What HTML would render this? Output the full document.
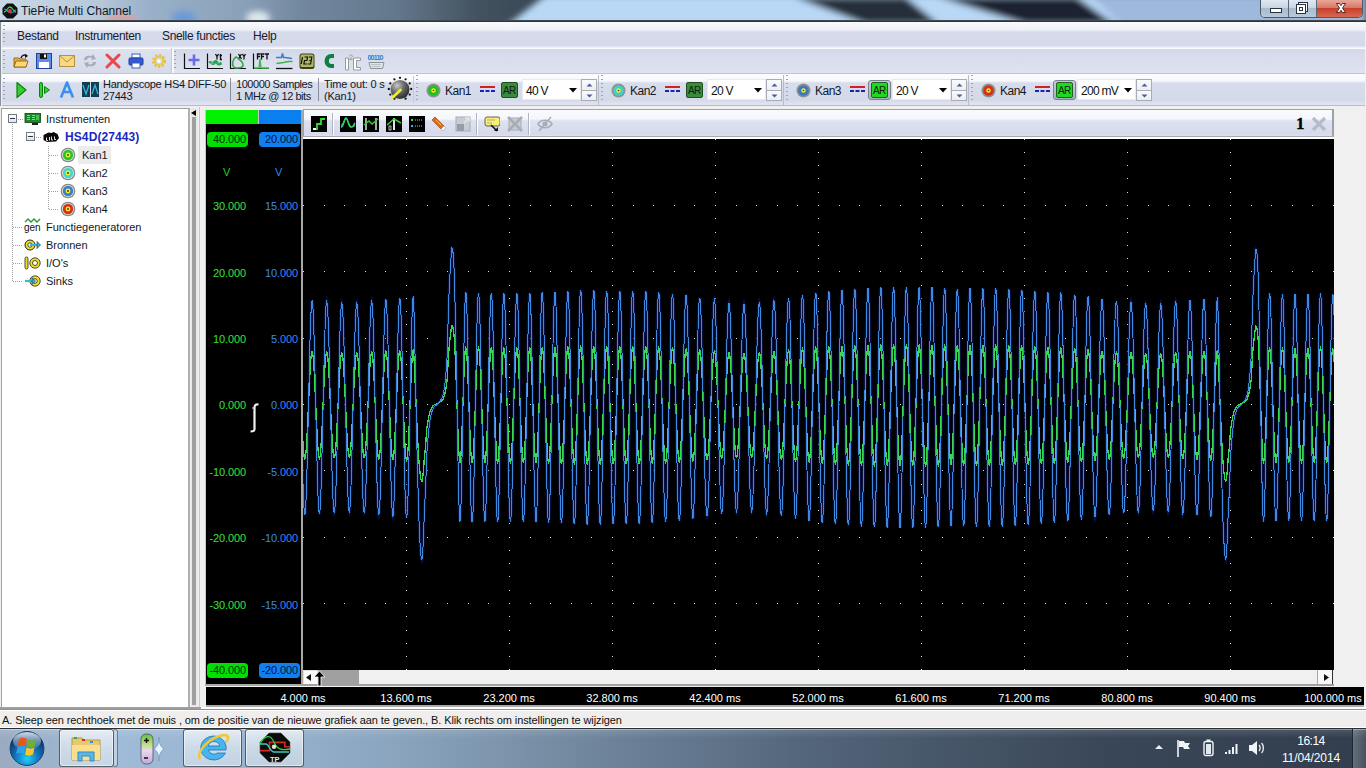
<!DOCTYPE html><html><head><meta charset="utf-8"><style>
*{margin:0;padding:0;box-sizing:border-box}
html,body{width:1366px;height:768px;overflow:hidden;background:#f0f0f0}
body{position:relative;font-family:"Liberation Sans", sans-serif;font-size:11px;color:#000}
.a{position:absolute}
.t{position:absolute;white-space:nowrap;line-height:1}
</style></head><body>

<svg class="a" style="left:0;top:0" width="1366" height="21" viewBox="0 0 1366 21"><defs><linearGradient id="tg" x1="0" x2="1366" gradientUnits="userSpaceOnUse"><stop offset="0" stop-color="#cad8e6"/><stop offset="0.07" stop-color="#b8c9da"/><stop offset="0.11" stop-color="#98b0c9"/><stop offset="0.18" stop-color="#8aa0b8"/><stop offset="0.22" stop-color="#72889e"/><stop offset="0.29" stop-color="#64788c"/><stop offset="0.35" stop-color="#42525f"/><stop offset="0.40" stop-color="#384654"/><stop offset="1" stop-color="#384654"/></linearGradient><filter id="tb" x="-5%" y="-50%" width="110%" height="200%"><feGaussianBlur stdDeviation="3"/></filter></defs>
<rect width="1366" height="21" fill="url(#tg)"/>
<g filter="url(#tb)">
<polygon points="546,-5 1366,-5 1366,26 506,26" fill="#b8d8f6"/>
<polygon points="794,-3 905,-3 939,24 866,24" fill="#272d3a"/>
<polygon points="938,-3 1076,-3 1114,24 1026,24" fill="#1f2433"/>
<polygon points="1090,-5 1366,-5 1366,26 1122,26" fill="#9fb9de"/>
<ellipse cx="122" cy="20" rx="16" ry="6" fill="#d8a0a0"/>
<ellipse cx="184" cy="18" rx="12" ry="7" fill="#6a9ad8"/>
<ellipse cx="258" cy="18" rx="12" ry="7" fill="#dfe8ea"/>
</g></svg>
<svg class="a" style="left:2px;top:3px" width="16" height="16" viewBox="0 0 16 16"><path d="M5 0.5h6l4.5 4.5v6l-4.5 4.5h-6l-4.5-4.5v-6z" fill="#111"/><path d="M2 9c3 0 3-5 6-5s3 5 6 5" stroke="#2fd24a" stroke-width="1.3" fill="none"/><path d="M2 6c3 0 4 4 7 4s3-3 5-3" stroke="#3aa0e8" stroke-width="1.1" fill="none"/><circle cx="8" cy="8" r="2" fill="#e03030"/></svg>
<div class="t" style="left:21px;top:5px;font-size:12px;color:#101828">TiePie Multi Channel</div>
<div class="a" style="left:1260px;top:0;width:103px;height:18px;border:1px solid #4a5868;border-top:none;border-radius:0 0 5px 5px;overflow:hidden;background:#b8c8d8">
<div class="a" style="left:0;top:0;width:27px;height:17px;background:linear-gradient(#dfe8f2,#c8d6e4 45%,#a8bccf 50%,#b8cad9)"></div>
<div class="a" style="left:27px;top:0;width:1px;height:17px;background:#5a6878"></div>
<div class="a" style="left:28px;top:0;width:27px;height:17px;background:linear-gradient(#dfe8f2,#c8d6e4 45%,#a8bccf 50%,#b8cad9)"></div>
<div class="a" style="left:55px;top:0;width:1px;height:17px;background:#5a6878"></div>
<div class="a" style="left:56px;top:0;width:47px;height:17px;background:linear-gradient(#e8a898,#d87868 45%,#c84028 50%,#d86850)"></div>
<svg class="a" style="left:0;top:0" width="103" height="18" viewBox="1260 0 103 18"><rect x="1269.5" y="8.5" width="11" height="4" fill="#fff" stroke="#2a3440"/><rect x="1297.5" y="2.5" width="9" height="9" fill="#fff" stroke="#2a3440"/><rect x="1295.5" y="4.5" width="9" height="9" fill="#fff" stroke="#2a3440"/><rect x="1295.5" y="4.5" width="9" height="9" fill="none" stroke="#2a3440"/><rect x="1298.5" y="7.5" width="3" height="3" fill="none" stroke="#2a3440"/><path d="M1335.5 3.5h3l1.5 2.2 1.5-2.2h3l-3 4.5 3 4.5h-3l-1.5-2.2-1.5 2.2h-3l3-4.5z" fill="#fff" stroke="#3a2018" stroke-width="0.9" stroke-linejoin="round"/></svg>
</div>
<div class="a" style="left:0;top:20px;width:1366px;height:2px;background:linear-gradient(#4a5260,#252a30)"></div>
<div class="a" style="left:0;top:22px;width:1366px;height:746px;background:#f0f0f0"></div>
<div class="a" style="left:0;top:22px;width:1px;height:84px;background:#8a9098"></div>
<div class="a" style="left:2px;top:22px;width:1363px;height:26px;background:linear-gradient(#fafbfd 0,#eef1f8 8px,#d6dbeb 10px,#d5daea 24px,#eef0f8 25px)"></div>
<div class="t" style="left:17px;top:30px;font-size:12px;letter-spacing:-0.35px;color:#1a1a2a">Bestand</div>
<div class="t" style="left:75px;top:30px;font-size:12px;letter-spacing:-0.35px;color:#1a1a2a">Instrumenten</div>
<div class="t" style="left:162px;top:30px;font-size:12px;letter-spacing:-0.35px;color:#1a1a2a">Snelle functies</div>
<div class="t" style="left:253px;top:30px;font-size:12px;letter-spacing:-0.35px;color:#1a1a2a">Help</div>
<div class="a" style="left:3px;top:25px;width:2px;height:20px;background:repeating-linear-gradient(#9aa4b8 0,#9aa4b8 1px,transparent 1px,transparent 4px)"></div>
<div class="a" style="left:2px;top:48px;width:1363px;height:26px;background:linear-gradient(#fafbfe 0,#fafbfe 1px,#d4d9e9 1px,#dfe3f2)"></div>
<div class="a" style="left:2px;top:73px;width:1363px;height:1px;background:#c0c4d0"></div>
<div class="a" style="left:2px;top:48px;width:170px;height:25px;background:linear-gradient(#fff 0,#fff 1px,#dde2f0 1px,#d6dbea);border-right:1px solid #c8ccd8;box-shadow:1px 0 0 #fafbfe,2px 0 0 #fafbfe"></div>
<div class="a" style="left:3px;top:51px;width:2px;height:20px;background:repeating-linear-gradient(#9aa4b8 0,#9aa4b8 1px,transparent 1px,transparent 4px)"></div>
<div class="a" style="left:174px;top:51px;width:2px;height:20px;background:repeating-linear-gradient(#9aa4b8 0,#9aa4b8 1px,transparent 1px,transparent 4px)"></div>
<svg class="a" style="left:13px;top:53px" width="16" height="16" viewBox="0 0 16 16"><path d="M1 5h5l1 1h6v8H1z" fill="#e8b040" stroke="#a06818"/><path d="M1 14l2-6h12l-2 6z" fill="#fcd878" stroke="#a06818"/><path d="M8 5c1-3 4-4 6-2" stroke="#111" stroke-width="1.5" fill="none"/><path d="M12 1l3 2-3 2z" fill="#111"/></svg>
<svg class="a" style="left:36px;top:53px" width="16" height="16" viewBox="0 0 16 16"><rect x="0.5" y="0.5" width="15" height="15" fill="#5a8ee8" stroke="#2040a0"/><rect x="4" y="1" width="7" height="5" fill="#111"/><rect x="8" y="1.5" width="2" height="3" fill="#fff"/><rect x="3" y="9" width="10" height="6" fill="#fff"/></svg>
<svg class="a" style="left:59px;top:53px" width="16" height="16" viewBox="0 0 16 16"><rect x="0.5" y="2.5" width="15" height="11" fill="#f8d880" stroke="#b89040"/><path d="M1 3l7 6 7-6" stroke="#b89040" fill="none"/></svg>
<svg class="a" style="left:82px;top:53px" width="16" height="16" viewBox="0 0 16 16"><path d="M2 7c0-4 4-5 8-4l1-2 3 5-5 1 1-2c-3-1-5 0-5 2z" fill="#a8acb4"/><path d="M14 9c0 4-4 5-8 4l-1 2-3-5 5-1-1 2c3 1 5 0 5-2z" fill="#a8acb4"/></svg>
<svg class="a" style="left:105px;top:53px" width="16" height="16" viewBox="0 0 16 16"><path d="M2 2l12 12M14 2L2 14" stroke="#e84848" stroke-width="3" stroke-linecap="round"/></svg>
<svg class="a" style="left:128px;top:53px" width="16" height="16" viewBox="0 0 16 16"><rect x="4" y="1" width="8" height="4" fill="#fff" stroke="#4058b0"/><rect x="1" y="5" width="14" height="7" rx="1" fill="#3058d8" stroke="#2040a0"/><rect x="4" y="10" width="8" height="5" fill="#fff" stroke="#4058b0"/></svg>
<svg class="a" style="left:151px;top:53px" width="16" height="16" viewBox="0 0 16 16"><circle cx="8" cy="8" r="5.5" fill="none" stroke="#e8c040" stroke-width="3" stroke-dasharray="2.2 1.4"/><circle cx="8" cy="8" r="4" fill="none" stroke="#e8c848" stroke-width="2"/><circle cx="8" cy="8" r="1.6" fill="#fff"/></svg>
<svg class="a" style="left:183px;top:53px" width="18" height="18" viewBox="0 0 18 18"><path d="M1.5 0.5v15H17" stroke="#111" stroke-width="1.2" fill="none"/><path d="M11 1.5v11M5.5 7h11" stroke="#6a6ae8" stroke-width="2.6"/></svg>
<svg class="a" style="left:206px;top:53px" width="18" height="18" viewBox="0 0 18 18"><path d="M1.5 0.5v15H17" stroke="#111" stroke-width="1.2" fill="none"/><path d="M9.5 1l1.5 2.5 1.5-2.5M11 3.5v3M14.5 1v5.5h1.5M13.5 2.5h2.5" stroke="#111" stroke-width="1.3" fill="none"/><path d="M3.5 10c1.5-2 3 2 4.5 0s2-2 3.5 0 2 1 4 0" stroke="#28a048" stroke-width="3" fill="none"/><path d="M4.5 10c1-1 2 1 3 0M11 9.5c1 .5 2 .5 3 0" stroke="#70e0e0" stroke-width="1" fill="none"/></svg>
<svg class="a" style="left:229px;top:53px" width="18" height="18" viewBox="0 0 18 18"><path d="M1.5 0.5v15H17" stroke="#111" stroke-width="1.2" fill="none"/><path d="M9.5 1l3 5M12.5 1l-3 5M13.5 1l1.5 2.5 1.5-2.5M15 3.5v3" stroke="#111" stroke-width="1.3" fill="none"/><path d="M7 4c-3 2-4 6-3 9s7 2 9 1 1-5-2-7-3-3-4-3z" stroke="#38a848" stroke-width="1.6" fill="none"/></svg>
<svg class="a" style="left:252px;top:53px" width="18" height="18" viewBox="0 0 18 18"><path d="M1.5 0.5v15H17" stroke="#111" stroke-width="1.2" fill="none"/><path d="M5.5 6.5v-5.5h3M5.5 3.5h2.5M9.5 6.5v-5.5h3M9.5 3.5h2.5M13 1h4M15 1v5.5" stroke="#111" stroke-width="1.3" fill="none"/><path d="M2 15h5l1-9 1 9h8" stroke="#40b848" stroke-width="1.4" fill="none"/></svg>
<svg class="a" style="left:276px;top:53px" width="18" height="18" viewBox="0 0 18 18"><path d="M0 4.5h5.5l1-4 1 4h1.5l7 1" stroke="#3a80c0" stroke-width="1.5" fill="none"/><path d="M0.5 10.5l7-1 5-1h4" stroke="#40b048" stroke-width="1.6" fill="none"/><path d="M0 15.5h16.5" stroke="#111" stroke-width="1.3"/></svg>
<svg class="a" style="left:299px;top:53px" width="18" height="18" viewBox="0 0 18 18"><rect x="0.5" y="0.5" width="15" height="15.5" rx="2.5" fill="#404018"/><rect x="1.5" y="1.5" width="13" height="12.5" rx="1.5" fill="#b0b868"/><path d="M3.5 4l-1.2 7M5.5 4h3l-.6 3.5h-2.4l-.6 3.5h3M9.8 4h3l-1.2 7h-3M10.4 7.5h2" stroke="#111" stroke-width="1.2" fill="none"/></svg>
<svg class="a" style="left:322px;top:53px" width="18" height="18" viewBox="0 0 18 18"><path d="M12 1H9A6.5 7 0 0 0 9 15H12V11H9.5A2.6 3 0 0 1 9.5 5H12z" fill="#108040"/></svg>
<svg class="a" style="left:344px;top:53px" width="18" height="18" viewBox="0 0 18 18"><path d="M1.5 5h3v12h-3z" stroke="#999" stroke-width="1" fill="#fff"/><path d="M5.5 3.5c0-2 3-2 3 0 0 1-3 2-3 3h3" stroke="#999" stroke-width="0.9" fill="none"/><path d="M16.5 7.5v-2.5h-7v12h7v-2.5h-4v-7z" stroke="#999" stroke-width="1" fill="#fff"/></svg>
<svg class="a" style="left:368px;top:53px" width="18" height="18" viewBox="0 0 18 18"><text x="-0.5" y="6.5" font-size="7" font-weight="bold" fill="#2a80c8" font-family="Liberation Sans" letter-spacing="-0.8">00110</text><path d="M1 9.5h15l-1.5 6h-12z" fill="#e0e4e8" stroke="#909498"/><path d="M3.5 11.5h10M4.5 13.5h8" stroke="#888" stroke-width="0.8" stroke-dasharray="1 1"/></svg>
<div class="a" style="left:2px;top:74px;width:1363px;height:32px;background:linear-gradient(#fdfdfe 0,#f6f8fc 7px,#d8ddec 9px,#d4d9e9 26px,#e2e5f2 31px)"></div>
<div class="a" style="left:2px;top:105px;width:1363px;height:1px;background:#b8bcc8"></div>
<div class="a" style="left:3px;top:78px;width:2px;height:24px;background:repeating-linear-gradient(#9aa4b8 0,#9aa4b8 1px,transparent 1px,transparent 4px)"></div>
<svg class="a" style="left:15px;top:81px" width="14" height="18" viewBox="0 0 14 18"><path d="M2 1.5l9 7.5-9 7.5z" fill="#30d030" stroke="#108010" stroke-width="1.2" stroke-linejoin="round"/></svg>
<svg class="a" style="left:38px;top:81px" width="14" height="18" viewBox="0 0 14 18"><rect x="1.5" y="1.5" width="3" height="15" rx="1.5" fill="#30d030" stroke="#108010"/><path d="M6.5 5.5l5 3.5-5 3.5z" fill="#30d030" stroke="#108010" stroke-linejoin="round"/></svg>
<svg class="a" style="left:59px;top:81px" width="16" height="18" viewBox="0 0 16 18"><path d="M2 16.5L8 1.5l6 15M4.5 11h7" stroke="#3a90f0" stroke-width="2.6" fill="none" stroke-linejoin="round"/></svg>
<svg class="a" style="left:82px;top:82px" width="17" height="15" viewBox="0 0 17 15"><rect x="0" y="0" width="8" height="15" fill="#104050"/><rect x="9" y="0" width="8" height="15" fill="#104050"/><path d="M1 3l3 9 3-9M10 12l3-9 3 9" stroke="#3ab0e8" stroke-width="1.3" fill="none"/></svg>
<div class="t" style="left:103px;top:79px;letter-spacing:-0.27px;color:#101828">Handyscope HS4 DIFF-50</div>
<div class="t" style="left:103px;top:91px;letter-spacing:-0.27px;color:#101828">27443</div>
<div class="a" style="left:230px;top:78px;width:1px;height:23px;background:#8890a0"></div>
<div class="t" style="left:236px;top:79px;letter-spacing:-0.45px;color:#101828">100000 Samples</div>
<div class="t" style="left:236px;top:91px;letter-spacing:-0.45px;color:#101828">1 MHz @ 12 bits</div>
<div class="a" style="left:318px;top:78px;width:1px;height:23px;background:#8890a0"></div>
<div class="t" style="left:324px;top:79px;letter-spacing:-0.2px;color:#101828">Time out: 0 s</div>
<div class="t" style="left:324px;top:91px;letter-spacing:-0.2px;color:#101828">(Kan1)</div>
<svg class="a" style="left:385px;top:75px" width="30" height="28" viewBox="385 75 30 28"><defs><radialGradient id="kg" cx="35%" cy="30%" r="75%"><stop offset="0" stop-color="#c8c8c8"/><stop offset="0.45" stop-color="#707070"/><stop offset="1" stop-color="#282828"/></radialGradient></defs><circle cx="394.4" cy="98.7" r="1.15" fill="#111"/><circle cx="390.3" cy="94.6" r="1.15" fill="#111"/><circle cx="388.8" cy="89.0" r="1.15" fill="#111"/><circle cx="390.3" cy="83.4" r="1.15" fill="#111"/><circle cx="394.4" cy="79.3" r="1.15" fill="#111"/><circle cx="400.0" cy="77.8" r="1.15" fill="#111"/><circle cx="405.6" cy="79.3" r="1.15" fill="#111"/><circle cx="409.7" cy="83.4" r="1.15" fill="#111"/><circle cx="411.2" cy="89.0" r="1.15" fill="#111"/><circle cx="409.7" cy="94.6" r="1.15" fill="#111"/><circle cx="405.6" cy="98.7" r="1.15" fill="#111"/><circle cx="400" cy="89.5" r="9.5" fill="url(#kg)"/><path d="M392.5 97.5L400.5 90" stroke="#f0f030" stroke-width="2.6" stroke-linecap="round"/></svg>
<div class="a" style="left:413px;top:76px;width:1px;height:27px;background:#c8ccd8"></div>
<div class="a" style="left:416px;top:75px;width:2px;height:28px;background:repeating-linear-gradient(#9aa4b8 0,#9aa4b8 1px,transparent 1px,transparent 4px)"></div><svg class="a" style="left:426px;top:83px" width="15" height="15" viewBox="0 0 15 15"><circle cx="7.5" cy="7.5" r="7" fill="#909090"/><circle cx="7.5" cy="7.5" r="5.3" fill="#20c020"/><circle cx="7.5" cy="7.5" r="2.2" fill="#f0f020"/><circle cx="7.5" cy="7.5" r="0.8" fill="#603020"/></svg><div class="t" style="left:445px;top:85px;font-size:12px;letter-spacing:-0.5px;color:#101828">Kan1</div><svg class="a" style="left:480px;top:86px" width="15" height="8" viewBox="0 0 15 8"><rect x="0" y="0" width="15" height="2" fill="#d02020"/><path d="M0 5h4M5.5 5h4M11 5h4" stroke="#2020b0" stroke-width="2"/></svg><div class="a" style="left:501px;top:82px;width:17px;height:16px;border:1px solid #205020;border-radius:2px;background:#3a8a3e"></div><div class="t" style="left:503px;top:86px;font-size:10px;letter-spacing:-0.6px;color:#102010">AR</div><div class="a" style="left:522px;top:79px;width:59px;height:21px;background:#fff;border:1px solid #e8eaf0"></div><div class="t" style="left:526px;top:85px;font-size:12px;letter-spacing:-0.7px;color:#101010">40 V</div><svg class="a" style="left:569px;top:88px" width="8" height="5" viewBox="0 0 8 5"><path d="M0 0h8L4 4.5z" fill="#000"/></svg><div class="a" style="left:581px;top:79px;width:16px;height:11px;border:1px solid #a8acb4;border-bottom:none;background:linear-gradient(#fafafa,#eceef2)"></div><div class="a" style="left:581px;top:90px;width:16px;height:11px;border:1px solid #a8acb4;background:linear-gradient(#fafafa,#eceef2)"></div><svg class="a" style="left:586px;top:83px" width="7" height="4" viewBox="0 0 7 4"><path d="M0.5 3.5L3.5 0.5 6.5 3.5z" fill="#4a5aa0"/></svg><svg class="a" style="left:586px;top:94px" width="7" height="4" viewBox="0 0 7 4"><path d="M0.5 0.5L3.5 3.5 6.5 0.5z" fill="#4a5aa0"/></svg><div class="a" style="left:598px;top:75px;width:1px;height:30px;background:#b8bcc8"></div>
<div class="a" style="left:601px;top:75px;width:2px;height:28px;background:repeating-linear-gradient(#9aa4b8 0,#9aa4b8 1px,transparent 1px,transparent 4px)"></div><svg class="a" style="left:611px;top:83px" width="15" height="15" viewBox="0 0 15 15"><circle cx="7.5" cy="7.5" r="7" fill="#909090"/><circle cx="7.5" cy="7.5" r="5.3" fill="#40d0c8"/><circle cx="7.5" cy="7.5" r="2.2" fill="#f0f020"/><circle cx="7.5" cy="7.5" r="0.8" fill="#603020"/></svg><div class="t" style="left:630px;top:85px;font-size:12px;letter-spacing:-0.5px;color:#101828">Kan2</div><svg class="a" style="left:665px;top:86px" width="15" height="8" viewBox="0 0 15 8"><rect x="0" y="0" width="15" height="2" fill="#d02020"/><path d="M0 5h4M5.5 5h4M11 5h4" stroke="#2020b0" stroke-width="2"/></svg><div class="a" style="left:686px;top:82px;width:17px;height:16px;border:1px solid #205020;border-radius:2px;background:#3a8a3e"></div><div class="t" style="left:688px;top:86px;font-size:10px;letter-spacing:-0.6px;color:#102010">AR</div><div class="a" style="left:707px;top:79px;width:59px;height:21px;background:#fff;border:1px solid #e8eaf0"></div><div class="t" style="left:711px;top:85px;font-size:12px;letter-spacing:-0.7px;color:#101010">20 V</div><svg class="a" style="left:754px;top:88px" width="8" height="5" viewBox="0 0 8 5"><path d="M0 0h8L4 4.5z" fill="#000"/></svg><div class="a" style="left:766px;top:79px;width:16px;height:11px;border:1px solid #a8acb4;border-bottom:none;background:linear-gradient(#fafafa,#eceef2)"></div><div class="a" style="left:766px;top:90px;width:16px;height:11px;border:1px solid #a8acb4;background:linear-gradient(#fafafa,#eceef2)"></div><svg class="a" style="left:771px;top:83px" width="7" height="4" viewBox="0 0 7 4"><path d="M0.5 3.5L3.5 0.5 6.5 3.5z" fill="#4a5aa0"/></svg><svg class="a" style="left:771px;top:94px" width="7" height="4" viewBox="0 0 7 4"><path d="M0.5 0.5L3.5 3.5 6.5 0.5z" fill="#4a5aa0"/></svg><div class="a" style="left:783px;top:75px;width:1px;height:30px;background:#b8bcc8"></div>
<div class="a" style="left:786px;top:75px;width:2px;height:28px;background:repeating-linear-gradient(#9aa4b8 0,#9aa4b8 1px,transparent 1px,transparent 4px)"></div><svg class="a" style="left:796px;top:83px" width="15" height="15" viewBox="0 0 15 15"><circle cx="7.5" cy="7.5" r="7" fill="#909090"/><circle cx="7.5" cy="7.5" r="5.3" fill="#3a78c0"/><circle cx="7.5" cy="7.5" r="2.2" fill="#f0f020"/><circle cx="7.5" cy="7.5" r="0.8" fill="#603020"/></svg><div class="t" style="left:815px;top:85px;font-size:12px;letter-spacing:-0.5px;color:#101828">Kan3</div><svg class="a" style="left:850px;top:86px" width="15" height="8" viewBox="0 0 15 8"><rect x="0" y="0" width="15" height="2" fill="#d02020"/><path d="M0 5h4M5.5 5h4M11 5h4" stroke="#2020b0" stroke-width="2"/></svg><div class="a" style="left:868px;top:80px;width:23px;height:20px;border:1px solid #7a8090;border-radius:3px;background:linear-gradient(#c8ccd8,#a8b0c0)"></div><div class="a" style="left:871px;top:82px;width:17px;height:16px;border:1px solid #206020;border-radius:2px;background:#20d820"></div><div class="t" style="left:873px;top:86px;font-size:10px;letter-spacing:-0.6px;color:#102010">AR</div><div class="a" style="left:892px;top:79px;width:59px;height:21px;background:#fff;border:1px solid #e8eaf0"></div><div class="t" style="left:896px;top:85px;font-size:12px;letter-spacing:-0.7px;color:#101010">20 V</div><svg class="a" style="left:939px;top:88px" width="8" height="5" viewBox="0 0 8 5"><path d="M0 0h8L4 4.5z" fill="#000"/></svg><div class="a" style="left:951px;top:79px;width:16px;height:11px;border:1px solid #a8acb4;border-bottom:none;background:linear-gradient(#fafafa,#eceef2)"></div><div class="a" style="left:951px;top:90px;width:16px;height:11px;border:1px solid #a8acb4;background:linear-gradient(#fafafa,#eceef2)"></div><svg class="a" style="left:956px;top:83px" width="7" height="4" viewBox="0 0 7 4"><path d="M0.5 3.5L3.5 0.5 6.5 3.5z" fill="#4a5aa0"/></svg><svg class="a" style="left:956px;top:94px" width="7" height="4" viewBox="0 0 7 4"><path d="M0.5 0.5L3.5 3.5 6.5 0.5z" fill="#4a5aa0"/></svg><div class="a" style="left:968px;top:75px;width:1px;height:30px;background:#b8bcc8"></div>
<div class="a" style="left:971px;top:75px;width:2px;height:28px;background:repeating-linear-gradient(#9aa4b8 0,#9aa4b8 1px,transparent 1px,transparent 4px)"></div><svg class="a" style="left:981px;top:83px" width="15" height="15" viewBox="0 0 15 15"><circle cx="7.5" cy="7.5" r="7" fill="#909090"/><circle cx="7.5" cy="7.5" r="5.3" fill="#d83018"/><circle cx="7.5" cy="7.5" r="2.2" fill="#f0f020"/><circle cx="7.5" cy="7.5" r="0.8" fill="#603020"/></svg><div class="t" style="left:1000px;top:85px;font-size:12px;letter-spacing:-0.5px;color:#101828">Kan4</div><svg class="a" style="left:1035px;top:86px" width="15" height="8" viewBox="0 0 15 8"><rect x="0" y="0" width="15" height="2" fill="#d02020"/><path d="M0 5h4M5.5 5h4M11 5h4" stroke="#2020b0" stroke-width="2"/></svg><div class="a" style="left:1053px;top:80px;width:23px;height:20px;border:1px solid #7a8090;border-radius:3px;background:linear-gradient(#c8ccd8,#a8b0c0)"></div><div class="a" style="left:1056px;top:82px;width:17px;height:16px;border:1px solid #206020;border-radius:2px;background:#20d820"></div><div class="t" style="left:1058px;top:86px;font-size:10px;letter-spacing:-0.6px;color:#102010">AR</div><div class="a" style="left:1077px;top:79px;width:59px;height:21px;background:#fff;border:1px solid #e8eaf0"></div><div class="t" style="left:1081px;top:85px;font-size:12px;letter-spacing:-0.7px;color:#101010">200 mV</div><svg class="a" style="left:1124px;top:88px" width="8" height="5" viewBox="0 0 8 5"><path d="M0 0h8L4 4.5z" fill="#000"/></svg><div class="a" style="left:1136px;top:79px;width:16px;height:11px;border:1px solid #a8acb4;border-bottom:none;background:linear-gradient(#fafafa,#eceef2)"></div><div class="a" style="left:1136px;top:90px;width:16px;height:11px;border:1px solid #a8acb4;background:linear-gradient(#fafafa,#eceef2)"></div><svg class="a" style="left:1141px;top:83px" width="7" height="4" viewBox="0 0 7 4"><path d="M0.5 3.5L3.5 0.5 6.5 3.5z" fill="#4a5aa0"/></svg><svg class="a" style="left:1141px;top:94px" width="7" height="4" viewBox="0 0 7 4"><path d="M0.5 0.5L3.5 3.5 6.5 0.5z" fill="#4a5aa0"/></svg>
<div class="a" style="left:1px;top:108px;width:189px;height:601px;background:#fff;border:1px solid #a0a0a0;border-right:2px solid #b0b0b0;border-bottom:2px solid #a8a8a8"></div>
<div class="a" style="left:191px;top:108px;width:7px;height:600px;background:#e8e8e8"></div>
<svg class="a" style="left:191px;top:110px" width="6" height="6" viewBox="0 0 6 6"><path d="M0 3l5-3v6z" fill="#000"/></svg>
<div class="a" style="left:192px;top:117px;width:4px;height:588px;background:#a0a0a0"></div>
<div class="a" style="left:199px;top:107px;width:1px;height:602px;background:#c8c8c8"></div>
<div class="a" style="left:12px;top:124px;width:1px;height:158px;background:repeating-linear-gradient(#a0a0a0 0,#a0a0a0 1px,transparent 1px,transparent 2px)"></div>
<div class="a" style="left:48px;top:146px;width:1px;height:63px;background:repeating-linear-gradient(#a0a0a0 0,#a0a0a0 1px,transparent 1px,transparent 2px)"></div>
<div class="a" style="left:49px;top:155px;width:10px;height:1px;background:repeating-linear-gradient(90deg,#a0a0a0 0,#a0a0a0 1px,transparent 1px,transparent 2px)"></div>
<div class="a" style="left:49px;top:173px;width:10px;height:1px;background:repeating-linear-gradient(90deg,#a0a0a0 0,#a0a0a0 1px,transparent 1px,transparent 2px)"></div>
<div class="a" style="left:49px;top:191px;width:10px;height:1px;background:repeating-linear-gradient(90deg,#a0a0a0 0,#a0a0a0 1px,transparent 1px,transparent 2px)"></div>
<div class="a" style="left:49px;top:209px;width:10px;height:1px;background:repeating-linear-gradient(90deg,#a0a0a0 0,#a0a0a0 1px,transparent 1px,transparent 2px)"></div>
<div class="a" style="left:13px;top:227px;width:10px;height:1px;background:repeating-linear-gradient(90deg,#a0a0a0 0,#a0a0a0 1px,transparent 1px,transparent 2px)"></div>
<div class="a" style="left:13px;top:245px;width:10px;height:1px;background:repeating-linear-gradient(90deg,#a0a0a0 0,#a0a0a0 1px,transparent 1px,transparent 2px)"></div>
<div class="a" style="left:13px;top:263px;width:10px;height:1px;background:repeating-linear-gradient(90deg,#a0a0a0 0,#a0a0a0 1px,transparent 1px,transparent 2px)"></div>
<div class="a" style="left:13px;top:281px;width:10px;height:1px;background:repeating-linear-gradient(90deg,#a0a0a0 0,#a0a0a0 1px,transparent 1px,transparent 2px)"></div>
<div class="a" style="left:18px;top:119px;width:5px;height:1px;background:repeating-linear-gradient(90deg,#a0a0a0 0,#a0a0a0 1px,transparent 1px,transparent 2px)"></div>
<div class="a" style="left:36px;top:137px;width:5px;height:1px;background:repeating-linear-gradient(90deg,#a0a0a0 0,#a0a0a0 1px,transparent 1px,transparent 2px)"></div>
<div class="a" style="left:8px;top:114px;width:9px;height:9px;border:1px solid #707880;background:linear-gradient(#fff,#e0e4ea)"></div>
<div class="a" style="left:10px;top:118px;width:5px;height:1px;background:#303848"></div>
<div class="a" style="left:26px;top:132px;width:9px;height:9px;border:1px solid #707880;background:linear-gradient(#fff,#e0e4ea)"></div>
<div class="a" style="left:28px;top:136px;width:5px;height:1px;background:#303848"></div>
<svg class="a" style="left:24px;top:113px" width="18" height="13" viewBox="0 0 18 13"><rect x="1" y="0.5" width="15.5" height="9" fill="#1a8a2a" stroke="#0a4010" stroke-width="0.8"/><path d="M3 2.5h3M3 4.5h3M3 6.5h3M8 2.5h3M8 4.5h3M8 6.5h3" stroke="#70e080" stroke-width="1"/><rect x="12" y="2" width="3" height="5" fill="#40c050"/><rect x="8" y="10" width="6" height="2" fill="#222"/></svg>
<div class="t" style="left:46px;top:114px;color:#101828">Instrumenten</div>
<svg class="a" style="left:42px;top:131px" width="18" height="12" viewBox="0 0 18 12"><path d="M1.5 4l5-2.5 3 .5 2-1 4 2 1.5 4-3 3.5-9 .5-3.5-2z" fill="#0a0a0a"/><path d="M4.5 6.5v3h1.5M7.5 6v3.5M9.5 5.5v3.5h1.5M12.5 5.5v3h1.5" stroke="#f0d8d8" stroke-width="1" fill="none"/></svg>
<div class="t" style="left:65px;top:131px;font-weight:bold;font-size:12px;color:#1828c0;letter-spacing:0.1px">HS4D(27443)</div>
<div class="a" style="left:78px;top:146px;width:33px;height:18px;background:#ececec"></div>
<svg class="a" style="left:60px;top:147px" width="16" height="16" viewBox="0 0 16 16"><circle cx="8" cy="8" r="7.3" fill="#888"/><circle cx="8" cy="8" r="6" fill="#e8e8e8"/><circle cx="8" cy="8" r="5.2" fill="#28c828"/><circle cx="8" cy="8" r="2.4" fill="#f8f020"/><circle cx="8" cy="8" r="0.9" fill="#402010"/></svg>
<div class="t" style="left:82px;top:150px;color:#101828">Kan1</div>
<svg class="a" style="left:60px;top:165px" width="16" height="16" viewBox="0 0 16 16"><circle cx="8" cy="8" r="7.3" fill="#888"/><circle cx="8" cy="8" r="6" fill="#e8e8e8"/><circle cx="8" cy="8" r="5.2" fill="#40d8d0"/><circle cx="8" cy="8" r="2.4" fill="#f8f020"/><circle cx="8" cy="8" r="0.9" fill="#402010"/></svg>
<div class="t" style="left:82px;top:168px;color:#101828">Kan2</div>
<svg class="a" style="left:60px;top:183px" width="16" height="16" viewBox="0 0 16 16"><circle cx="8" cy="8" r="7.3" fill="#888"/><circle cx="8" cy="8" r="6" fill="#e8e8e8"/><circle cx="8" cy="8" r="5.2" fill="#3a80c8"/><circle cx="8" cy="8" r="2.4" fill="#f8f020"/><circle cx="8" cy="8" r="0.9" fill="#402010"/></svg>
<div class="t" style="left:82px;top:186px;color:#101828">Kan3</div>
<svg class="a" style="left:60px;top:201px" width="16" height="16" viewBox="0 0 16 16"><circle cx="8" cy="8" r="7.3" fill="#888"/><circle cx="8" cy="8" r="6" fill="#e8e8e8"/><circle cx="8" cy="8" r="5.2" fill="#d83018"/><circle cx="8" cy="8" r="2.4" fill="#f8f020"/><circle cx="8" cy="8" r="0.9" fill="#402010"/></svg>
<div class="t" style="left:82px;top:204px;color:#101828">Kan4</div>
<svg class="a" style="left:24px;top:218px" width="18" height="17" viewBox="0 0 18 17"><path d="M1 4l3-3 3 3 3-3 3 3 3-3" stroke="#20a030" stroke-width="1.4" fill="none"/><text x="0" y="13" font-size="10" font-family="Liberation Sans" fill="#111">gen</text></svg>
<div class="t" style="left:46px;top:222px;color:#101828">Functiegeneratoren</div>
<svg class="a" style="left:24px;top:238px" width="17" height="14" viewBox="0 0 17 14"><circle cx="6" cy="7" r="5" fill="#f0e020" stroke="#222" stroke-width="1"/><circle cx="6" cy="7" r="2.2" fill="#fff" stroke="#222" stroke-width="0.8"/><path d="M6 7h8" stroke="#30b8e0" stroke-width="2"/><path d="M13 3.5l3.5 3.5-3.5 3.5z" fill="#30b8e0" stroke="#222" stroke-width="0.6"/></svg>
<div class="t" style="left:46px;top:240px;color:#101828">Bronnen</div>
<svg class="a" style="left:24px;top:256px" width="17" height="14" viewBox="0 0 17 14"><rect x="1" y="1" width="3" height="12" rx="1.5" fill="#f0e020" stroke="#222" stroke-width="0.8"/><circle cx="11" cy="7" r="5.2" fill="#f0e020" stroke="#222" stroke-width="0.8"/><circle cx="11" cy="7" r="2.5" fill="#fff" stroke="#222" stroke-width="0.8"/></svg>
<div class="t" style="left:46px;top:258px;color:#101828">I/O's</div>
<svg class="a" style="left:24px;top:274px" width="17" height="14" viewBox="0 0 17 14"><circle cx="11" cy="7" r="5.2" fill="#f0e020" stroke="#222" stroke-width="0.8"/><circle cx="11" cy="7" r="2.3" fill="#fff" stroke="#222" stroke-width="0.8"/><path d="M1 7h8" stroke="#30b8e0" stroke-width="2.2"/><path d="M8 3.5l3.5 3.5-3.5 3.5z" fill="#30b8e0" stroke="#222" stroke-width="0.6"/></svg>
<div class="t" style="left:46px;top:276px;color:#101828">Sinks</div>
<div class="a" style="left:205px;top:108px;width:98px;height:578px;background:#000;border-left:1px solid #c8c8c8"></div>
<div class="a" style="left:206px;top:110px;width:52px;height:14px;background:#00f000"></div>
<div class="a" style="left:259px;top:110px;width:42px;height:14px;background:#0a80f0"></div>
<div class="a" style="left:258px;top:108px;width:1px;height:16px;background:#c8c8c8"></div>
<div class="a" style="left:205px;top:108px;width:98px;height:2px;background:#f0f0f0"></div>
<div class="a" style="left:301px;top:110px;width:2px;height:576px;background:#a8a8a8"></div>
<div class="a" style="left:205px;top:684px;width:98px;height:2px;background:#a8a8a8"></div>
<div class="a" style="left:207px;top:132px;width:41px;height:15px;border-radius:4px;background:#00e000"></div><div class="t" style="left:207px;top:134px;width:39px;text-align:right;color:#053005;letter-spacing:-0.1px">40.000</div>
<div class="a" style="left:259px;top:132px;width:41px;height:15px;border-radius:4px;background:#1080f0"></div><div class="t" style="left:259px;top:134px;width:39px;text-align:right;color:#051040;letter-spacing:-0.1px">20.000</div>
<div class="a" style="left:207px;top:663px;width:41px;height:15px;border-radius:4px;background:#00e000"></div><div class="t" style="left:207px;top:665px;width:39px;text-align:right;color:#053005;letter-spacing:-0.1px">-40.000</div>
<div class="a" style="left:259px;top:663px;width:41px;height:15px;border-radius:4px;background:#1080f0"></div><div class="t" style="left:259px;top:665px;width:39px;text-align:right;color:#051040;letter-spacing:-0.1px">-20.000</div>
<div class="t" style="left:223px;top:167px;color:#20d020">V</div>
<div class="t" style="left:275px;top:167px;color:#3088f0">V</div>
<div class="t" style="left:200px;top:201px;width:46px;text-align:right;color:#38e038;letter-spacing:-0.1px">30.000</div>
<div class="t" style="left:250px;top:201px;width:48px;text-align:right;color:#3a8af0;letter-spacing:-0.1px">15.000</div>
<div class="t" style="left:200px;top:268px;width:46px;text-align:right;color:#38e038;letter-spacing:-0.1px">20.000</div>
<div class="t" style="left:250px;top:268px;width:48px;text-align:right;color:#3a8af0;letter-spacing:-0.1px">10.000</div>
<div class="t" style="left:200px;top:334px;width:46px;text-align:right;color:#38e038;letter-spacing:-0.1px">10.000</div>
<div class="t" style="left:250px;top:334px;width:48px;text-align:right;color:#3a8af0;letter-spacing:-0.1px">5.000</div>
<div class="t" style="left:200px;top:400px;width:46px;text-align:right;color:#38e038;letter-spacing:-0.1px">0.000</div>
<div class="t" style="left:250px;top:400px;width:48px;text-align:right;color:#3a8af0;letter-spacing:-0.1px">0.000</div>
<div class="t" style="left:200px;top:467px;width:46px;text-align:right;color:#38e038;letter-spacing:-0.1px">-10.000</div>
<div class="t" style="left:250px;top:467px;width:48px;text-align:right;color:#3a8af0;letter-spacing:-0.1px">-5.000</div>
<div class="t" style="left:200px;top:533px;width:46px;text-align:right;color:#38e038;letter-spacing:-0.1px">-20.000</div>
<div class="t" style="left:250px;top:533px;width:48px;text-align:right;color:#3a8af0;letter-spacing:-0.1px">-10.000</div>
<div class="t" style="left:200px;top:600px;width:46px;text-align:right;color:#38e038;letter-spacing:-0.1px">-30.000</div>
<div class="t" style="left:250px;top:600px;width:48px;text-align:right;color:#3a8af0;letter-spacing:-0.1px">-15.000</div>
<svg class="a" style="left:245px;top:398px" width="16" height="38" viewBox="245 398 16 38"><path d="M258.5 404.5C256 404 254.5 405 254.5 407.5V429C254.5 431 253.5 431.5 250.5 431.5" stroke="#f0f0f0" stroke-width="2.2" fill="none"/><path d="M254 408h-2" stroke="#e0e0e0" stroke-width="1.2"/></svg>
<div class="a" style="left:303px;top:109px;width:1031px;height:28px;background:linear-gradient(#fafbfe 0,#f4f6fb 9px,#dde1f0 11px,#d6dbec 24px,#e2e5f4 27px);border:1px solid #a0a0a8;border-bottom:none;border-right:2px solid #a0a0a8"></div>
<div class="a" style="left:303px;top:136px;width:1031px;height:1px;background:#a8a8b0"></div>
<svg class="a" style="left:311px;top:116px" width="16" height="16" viewBox="0 0 16 16"><rect width="16" height="16" fill="#000"/><path d="M2 13h4v-5h4v-5h4" stroke="#30e030" stroke-width="1.8" fill="none"/><rect x="2" y="12" width="3" height="2" fill="#fff"/></svg>
<svg class="a" style="left:340px;top:116px" width="16" height="16" viewBox="0 0 16 16"><rect width="16" height="16" fill="#000"/><path d="M1 11c3 0 3-9 5-9s2 9 5 9 3-3 4-4" stroke="#30d0d0" stroke-width="1.5" fill="none"/><path d="M1 9c3 0 3-6 5-6s3 8 6 8 2-2 3-2" stroke="#30d030" stroke-width="1.2" fill="none"/></svg>
<svg class="a" style="left:363px;top:116px" width="16" height="16" viewBox="0 0 16 16"><rect width="16" height="16" fill="#000"/><path d="M3 2v12M13 2v12" stroke="#fff" stroke-width="1.3"/><path d="M1 9l5-4 3 3 6-5" stroke="#30d030" stroke-width="1.5" fill="none"/></svg>
<svg class="a" style="left:386px;top:116px" width="16" height="16" viewBox="0 0 16 16"><rect width="16" height="16" fill="#000"/><path d="M8 2v12" stroke="#fff" stroke-width="1.8"/><path d="M1 9l7-6 7 4" stroke="#30d030" stroke-width="1.5" fill="none"/><rect x="3" y="10" width="2" height="4" fill="none" stroke="#fff" stroke-width="0.7"/></svg>
<svg class="a" style="left:409px;top:116px" width="16" height="16" viewBox="0 0 16 16"><rect width="16" height="16" fill="#000"/><rect x="2" y="3" width="2" height="2" fill="#30e030"/><rect x="2" y="9" width="2" height="2" fill="#30b0f0"/><path d="M6 4h8M6 10h8" stroke="#bbb" stroke-width="1.2" stroke-dasharray="1 1"/></svg>
<svg class="a" style="left:431px;top:116px" width="16" height="16" viewBox="0 0 16 16"><path d="M4 1l9 9-3 3-9-9z" fill="#e86818" stroke="#903808" stroke-width="0.6"/><path d="M10 13l3-3 2 2-3 3z" fill="#fff" stroke="#888" stroke-width="0.5"/><path d="M5 4l5 5" stroke="#f8c040" stroke-width="1"/></svg>
<svg class="a" style="left:455px;top:116px" width="16" height="16" viewBox="0 0 16 16"><rect x="1" y="1" width="14" height="14" fill="#c8ccd4" stroke="#a8acb4"/><rect x="2" y="8" width="7" height="7" fill="#989ca4"/><path d="M9 7l5-5M10 2h4v4" stroke="#e8e8ec" stroke-width="1.3" fill="none"/></svg>
<svg class="a" style="left:484px;top:116px" width="16" height="16" viewBox="0 0 16 16"><rect x="1" y="1" width="15" height="9" rx="2" fill="#f8f070" stroke="#404040" stroke-width="0.8"/><path d="M3 4h8M3 7h5" stroke="#8080a0" stroke-width="0.6"/><path d="M7 9l6 6" stroke="#111" stroke-width="1.6"/><path d="M10 15h4v-4z" fill="#111"/></svg>
<svg class="a" style="left:507px;top:116px" width="16" height="16" viewBox="0 0 16 16"><rect x="2" y="2" width="12" height="12" fill="#c8ccd4" stroke="#a8acb4"/><path d="M1 1l14 14M15 1L1 15" stroke="#a8acb4" stroke-width="2.5"/></svg>
<svg class="a" style="left:537px;top:116px" width="16" height="16" viewBox="0 0 16 16"><path d="M1 8c3-5 11-5 14 0-3 5-11 5-14 0z" fill="none" stroke="#a8acb4" stroke-width="1.5"/><circle cx="8" cy="8" r="2.5" fill="#a8acb4"/><path d="M2 15L14 1" stroke="#a8acb4" stroke-width="1.5"/></svg>
<div class="a" style="left:332px;top:113px;width:1px;height:22px;background:#b0b4c0;box-shadow:1px 0 #fff"></div>
<div class="a" style="left:476px;top:113px;width:1px;height:22px;background:#b0b4c0;box-shadow:1px 0 #fff"></div>
<div class="a" style="left:528px;top:113px;width:1px;height:22px;background:#b0b4c0;box-shadow:1px 0 #fff"></div>
<div class="t" style="left:1296px;top:115px;font-family:'Liberation Serif',serif;font-weight:bold;font-size:17px;color:#000;-webkit-text-stroke:0.3px #000">1</div>
<svg class="a" style="left:1311px;top:116px" width="16" height="16" viewBox="0 0 16 16"><path d="M2 2l12 12M14 2L2 14" stroke="#b8bcc8" stroke-width="3.2"/></svg>
<svg class="a" style="left:303px;top:138px" width="1031" height="532" viewBox="0 0 1031 532"><rect width="1031" height="532" fill="#000"/><path d="M185 332h1v1h-1zM124 465h1v1h-1zM330 332h1v1h-1zM350 399h1v1h-1zM309 120h1v1h-1zM577 200h1v1h-1zM536 266h1v1h-1zM103 518h1v1h-1zM927 160h1v1h-1zM41 67h1v1h-1zM309 385h1v1h-1zM762 200h1v1h-1zM577 465h1v1h-1zM412 239h1v1h-1zM0 133h1v1h-1zM927 425h1v1h-1zM41 332h1v1h-1zM783 399h1v1h-1zM762 465h1v1h-1zM371 67h1v1h-1zM288 200h1v1h-1zM618 173h1v1h-1zM1009 67h1v1h-1zM824 40h1v1h-1zM515 346h1v1h-1zM247 266h1v1h-1zM453 133h1v1h-1zM371 332h1v1h-1zM288 465h1v1h-1zM618 200h1v1h-1zM618 438h1v1h-1zM1009 332h1v1h-1zM494 399h1v1h-1zM103 1h1v1h-1zM82 67h1v1h-1zM618 465h1v1h-1zM206 359h1v1h-1zM103 266h1v1h-1zM82 332h1v1h-1zM309 133h1v1h-1zM824 399h1v1h-1zM721 306h1v1h-1zM103 531h1v1h-1zM927 173h1v1h-1zM515 67h1v1h-1zM433 266h1v1h-1zM639 133h1v1h-1zM515 94h1v1h-1zM515 332h1v1h-1zM845 67h1v1h-1zM412 319h1v1h-1zM680 399h1v1h-1zM618 186h1v1h-1zM886 266h1v1h-1zM309 492h1v1h-1zM515 359h1v1h-1zM412 346h1v1h-1zM845 332h1v1h-1zM350 133h1v1h-1zM206 107h1v1h-1zM721 27h1v1h-1zM103 14h1v1h-1zM824 147h1v1h-1zM556 67h1v1h-1zM391 399h1v1h-1zM206 372h1v1h-1zM597 266h1v1h-1zM721 54h1v1h-1zM103 279h1v1h-1zM165 200h1v1h-1zM824 412h1v1h-1zM556 332h1v1h-1zM783 133h1v1h-1zM803 200h1v1h-1zM948 200h1v1h-1zM721 319h1v1h-1zM309 213h1v1h-1zM165 465h1v1h-1zM515 80h1v1h-1zM803 465h1v1h-1zM412 67h1v1h-1zM948 465h1v1h-1zM927 253h1v1h-1zM309 478h1v1h-1zM21 200h1v1h-1zM494 133h1v1h-1zM412 332h1v1h-1zM659 200h1v1h-1zM927 518h1v1h-1zM309 505h1v1h-1zM865 67h1v1h-1zM21 465h1v1h-1zM824 133h1v1h-1zM206 120h1v1h-1zM659 465h1v1h-1zM721 40h1v1h-1zM618 293h1v1h-1zM227 399h1v1h-1zM824 160h1v1h-1zM103 94h1v1h-1zM680 133h1v1h-1zM103 359h1v1h-1zM927 1h1v1h-1zM927 239h1v1h-1zM309 226h1v1h-1zM144 266h1v1h-1zM412 80h1v1h-1zM721 399h1v1h-1zM927 266h1v1h-1zM618 14h1v1h-1zM886 332h1v1h-1zM536 399h1v1h-1zM391 133h1v1h-1zM927 531h1v1h-1zM515 425h1v1h-1zM618 279h1v1h-1zM0 266h1v1h-1zM515 452h1v1h-1zM742 67h1v1h-1zM618 306h1v1h-1zM206 200h1v1h-1zM247 399h1v1h-1zM742 332h1v1h-1zM989 200h1v1h-1zM103 107h1v1h-1zM968 266h1v1h-1zM206 465h1v1h-1zM721 147h1v1h-1zM721 385h1v1h-1zM103 372h1v1h-1zM989 465h1v1h-1zM824 505h1v1h-1zM206 492h1v1h-1zM62 200h1v1h-1zM721 412h1v1h-1zM700 200h1v1h-1zM515 173h1v1h-1zM906 67h1v1h-1zM412 160h1v1h-1zM227 133h1v1h-1zM618 27h1v1h-1zM62 465h1v1h-1zM865 133h1v1h-1zM700 465h1v1h-1zM515 438h1v1h-1zM906 332h1v1h-1zM1030 200h1v1h-1zM412 425h1v1h-1zM206 186h1v1h-1zM474 266h1v1h-1zM1030 465h1v1h-1zM412 452h1v1h-1zM824 226h1v1h-1zM206 213h1v1h-1zM721 133h1v1h-1zM824 253h1v1h-1zM206 478h1v1h-1zM185 266h1v1h-1zM124 399h1v1h-1zM330 266h1v1h-1zM309 54h1v1h-1zM556 200h1v1h-1zM824 518h1v1h-1zM927 94h1v1h-1zM309 319h1v1h-1zM577 399h1v1h-1zM515 186h1v1h-1zM412 173h1v1h-1zM536 465h1v1h-1zM927 359h1v1h-1zM41 266h1v1h-1zM762 399h1v1h-1zM412 438h1v1h-1zM0 332h1v1h-1zM453 67h1v1h-1zM371 266h1v1h-1zM288 399h1v1h-1zM618 372h1v1h-1zM1009 266h1v1h-1zM824 239h1v1h-1zM247 465h1v1h-1zM453 332h1v1h-1zM618 399h1v1h-1zM309 40h1v1h-1zM103 200h1v1h-1zM82 266h1v1h-1zM927 80h1v1h-1zM309 67h1v1h-1zM268 133h1v1h-1zM103 465h1v1h-1zM927 107h1v1h-1zM309 332h1v1h-1zM515 1h1v1h-1zM433 200h1v1h-1zM639 67h1v1h-1zM721 505h1v1h-1zM103 492h1v1h-1zM927 372h1v1h-1zM515 266h1v1h-1zM433 465h1v1h-1zM639 332h1v1h-1zM618 120h1v1h-1zM886 200h1v1h-1zM515 293h1v1h-1zM515 531h1v1h-1zM124 133h1v1h-1zM845 266h1v1h-1zM412 518h1v1h-1zM350 67h1v1h-1zM618 385h1v1h-1zM886 465h1v1h-1zM103 186h1v1h-1zM350 332h1v1h-1zM206 306h1v1h-1zM597 200h1v1h-1zM721 226h1v1h-1zM103 213h1v1h-1zM824 346h1v1h-1zM556 266h1v1h-1zM783 67h1v1h-1zM762 133h1v1h-1zM597 465h1v1h-1zM721 253h1v1h-1zM103 478h1v1h-1zM309 147h1v1h-1zM165 399h1v1h-1zM515 14h1v1h-1zM783 332h1v1h-1zM288 133h1v1h-1zM412 1h1v1h-1zM803 399h1v1h-1zM948 399h1v1h-1zM721 518h1v1h-1zM309 412h1v1h-1zM515 279h1v1h-1zM494 67h1v1h-1zM412 266h1v1h-1zM618 133h1v1h-1zM206 27h1v1h-1zM927 452h1v1h-1zM21 399h1v1h-1zM494 332h1v1h-1zM412 531h1v1h-1zM824 67h1v1h-1zM206 54h1v1h-1zM659 399h1v1h-1zM865 266h1v1h-1zM824 94h1v1h-1zM824 332h1v1h-1zM206 319h1v1h-1zM721 239h1v1h-1zM618 492h1v1h-1zM824 359h1v1h-1zM680 67h1v1h-1zM103 293h1v1h-1zM309 160h1v1h-1zM144 200h1v1h-1zM412 14h1v1h-1zM680 332h1v1h-1zM927 200h1v1h-1zM927 438h1v1h-1zM309 425h1v1h-1zM144 465h1v1h-1zM412 279h1v1h-1zM391 67h1v1h-1zM206 40h1v1h-1zM927 465h1v1h-1zM618 213h1v1h-1zM0 200h1v1h-1zM824 80h1v1h-1zM391 332h1v1h-1zM618 478h1v1h-1zM165 133h1v1h-1zM0 465h1v1h-1zM803 133h1v1h-1zM742 266h1v1h-1zM948 133h1v1h-1zM968 200h1v1h-1zM618 505h1v1h-1zM206 399h1v1h-1zM989 399h1v1h-1zM103 306h1v1h-1zM968 465h1v1h-1zM927 186h1v1h-1zM721 346h1v1h-1zM659 133h1v1h-1zM515 107h1v1h-1zM412 94h1v1h-1zM227 67h1v1h-1zM62 399h1v1h-1zM700 399h1v1h-1zM515 372h1v1h-1zM906 266h1v1h-1zM412 359h1v1h-1zM227 332h1v1h-1zM618 226h1v1h-1zM474 200h1v1h-1zM865 332h1v1h-1zM515 399h1v1h-1zM1030 399h1v1h-1zM103 27h1v1h-1zM206 147h1v1h-1zM206 385h1v1h-1zM474 465h1v1h-1zM721 67h1v1h-1zM103 54h1v1h-1zM824 425h1v1h-1zM206 412h1v1h-1zM185 200h1v1h-1zM330 200h1v1h-1zM721 94h1v1h-1zM721 332h1v1h-1zM824 452h1v1h-1zM185 465h1v1h-1zM330 465h1v1h-1zM721 359h1v1h-1zM309 253h1v1h-1zM556 399h1v1h-1zM515 120h1v1h-1zM412 107h1v1h-1zM927 293h1v1h-1zM41 200h1v1h-1zM309 518h1v1h-1zM515 385h1v1h-1zM412 372h1v1h-1zM206 133h1v1h-1zM41 465h1v1h-1zM371 200h1v1h-1zM989 133h1v1h-1zM103 40h1v1h-1zM1009 200h1v1h-1zM824 173h1v1h-1zM453 266h1v1h-1zM371 465h1v1h-1zM721 80h1v1h-1zM1009 465h1v1h-1zM824 438h1v1h-1zM62 133h1v1h-1zM82 200h1v1h-1zM927 14h1v1h-1zM309 1h1v1h-1zM309 239h1v1h-1zM700 133h1v1h-1zM268 67h1v1h-1zM103 399h1v1h-1zM82 465h1v1h-1zM927 279h1v1h-1zM309 266h1v1h-1zM1030 133h1v1h-1zM268 332h1v1h-1zM927 306h1v1h-1zM309 531h1v1h-1zM515 200h1v1h-1zM433 399h1v1h-1zM639 266h1v1h-1zM618 54h1v1h-1zM515 465h1v1h-1zM124 67h1v1h-1zM845 200h1v1h-1zM618 319h1v1h-1zM886 399h1v1h-1zM824 186h1v1h-1zM515 492h1v1h-1zM124 332h1v1h-1zM845 465h1v1h-1zM103 120h1v1h-1zM350 266h1v1h-1zM577 67h1v1h-1zM721 160h1v1h-1zM103 147h1v1h-1zM536 133h1v1h-1zM103 385h1v1h-1zM927 27h1v1h-1zM577 332h1v1h-1zM206 505h1v1h-1zM762 67h1v1h-1zM597 399h1v1h-1zM721 425h1v1h-1zM103 412h1v1h-1zM556 465h1v1h-1zM783 266h1v1h-1zM762 332h1v1h-1zM288 67h1v1h-1zM618 40h1v1h-1zM721 452h1v1h-1zM309 346h1v1h-1zM515 213h1v1h-1zM247 133h1v1h-1zM288 332h1v1h-1zM412 200h1v1h-1zM618 67h1v1h-1zM515 478h1v1h-1zM494 266h1v1h-1zM412 465h1v1h-1zM618 332h1v1h-1zM824 1h1v1h-1zM206 226h1v1h-1zM865 200h1v1h-1zM103 133h1v1h-1zM824 266h1v1h-1zM206 253h1v1h-1zM865 465h1v1h-1zM721 173h1v1h-1zM824 293h1v1h-1zM824 531h1v1h-1zM206 518h1v1h-1zM433 133h1v1h-1zM721 438h1v1h-1zM309 94h1v1h-1zM412 186h1v1h-1zM680 266h1v1h-1zM309 359h1v1h-1zM144 399h1v1h-1zM412 213h1v1h-1zM927 399h1v1h-1zM412 478h1v1h-1zM618 147h1v1h-1zM824 14h1v1h-1zM391 266h1v1h-1zM206 239h1v1h-1zM618 412h1v1h-1zM165 67h1v1h-1zM577 133h1v1h-1zM824 279h1v1h-1zM0 399h1v1h-1zM803 67h1v1h-1zM742 200h1v1h-1zM948 67h1v1h-1zM309 80h1v1h-1zM165 332h1v1h-1zM803 332h1v1h-1zM742 465h1v1h-1zM948 332h1v1h-1zM968 399h1v1h-1zM927 120h1v1h-1zM309 107h1v1h-1zM21 67h1v1h-1zM103 505h1v1h-1zM927 147h1v1h-1zM927 385h1v1h-1zM659 67h1v1h-1zM268 200h1v1h-1zM927 412h1v1h-1zM659 332h1v1h-1zM515 306h1v1h-1zM906 200h1v1h-1zM412 293h1v1h-1zM227 266h1v1h-1zM618 160h1v1h-1zM906 465h1v1h-1zM618 425h1v1h-1zM474 399h1v1h-1zM721 1h1v1h-1zM103 226h1v1h-1zM206 346h1v1h-1zM144 133h1v1h-1zM721 266h1v1h-1zM103 253h1v1h-1zM927 133h1v1h-1zM515 27h1v1h-1zM185 399h1v1h-1zM330 399h1v1h-1zM721 293h1v1h-1zM721 531h1v1h-1zM515 54h1v1h-1zM309 452h1v1h-1zM515 319h1v1h-1zM412 306h1v1h-1zM206 67h1v1h-1zM927 492h1v1h-1zM41 399h1v1h-1zM989 67h1v1h-1zM968 133h1v1h-1zM824 107h1v1h-1zM206 94h1v1h-1zM206 332h1v1h-1zM453 200h1v1h-1zM371 399h1v1h-1zM721 14h1v1h-1zM989 332h1v1h-1zM103 239h1v1h-1zM1009 399h1v1h-1zM824 372h1v1h-1zM453 465h1v1h-1zM62 67h1v1h-1zM721 279h1v1h-1zM309 173h1v1h-1zM700 67h1v1h-1zM515 40h1v1h-1zM21 133h1v1h-1zM412 27h1v1h-1zM62 332h1v1h-1zM82 399h1v1h-1zM927 213h1v1h-1zM309 200h1v1h-1zM309 438h1v1h-1zM700 332h1v1h-1zM1030 67h1v1h-1zM412 54h1v1h-1zM268 266h1v1h-1zM927 478h1v1h-1zM309 465h1v1h-1zM474 133h1v1h-1zM639 200h1v1h-1zM1030 332h1v1h-1zM206 80h1v1h-1zM927 505h1v1h-1zM639 465h1v1h-1zM618 253h1v1h-1zM824 120h1v1h-1zM185 133h1v1h-1zM124 266h1v1h-1zM330 133h1v1h-1zM845 399h1v1h-1zM350 200h1v1h-1zM618 518h1v1h-1zM824 385h1v1h-1zM536 67h1v1h-1zM103 319h1v1h-1zM350 465h1v1h-1zM309 186h1v1h-1zM577 266h1v1h-1zM412 40h1v1h-1zM103 346h1v1h-1zM536 332h1v1h-1zM927 226h1v1h-1zM41 133h1v1h-1zM783 200h1v1h-1zM762 266h1v1h-1zM515 147h1v1h-1zM247 67h1v1h-1zM783 465h1v1h-1zM371 133h1v1h-1zM288 266h1v1h-1zM618 1h1v1h-1zM618 239h1v1h-1zM1009 133h1v1h-1zM515 412h1v1h-1zM247 332h1v1h-1zM494 200h1v1h-1zM412 399h1v1h-1zM618 266h1v1h-1zM206 160h1v1h-1zM494 465h1v1h-1zM103 67h1v1h-1zM82 133h1v1h-1zM618 531h1v1h-1zM824 200h1v1h-1zM206 425h1v1h-1zM865 399h1v1h-1zM721 107h1v1h-1zM103 332h1v1h-1zM824 465h1v1h-1zM206 452h1v1h-1zM433 67h1v1h-1zM721 372h1v1h-1zM824 492h1v1h-1zM515 133h1v1h-1zM433 332h1v1h-1zM412 120h1v1h-1zM680 200h1v1h-1zM886 67h1v1h-1zM309 293h1v1h-1zM515 160h1v1h-1zM412 147h1v1h-1zM845 133h1v1h-1zM412 385h1v1h-1zM680 465h1v1h-1zM412 412h1v1h-1zM391 200h1v1h-1zM206 173h1v1h-1zM597 67h1v1h-1zM103 80h1v1h-1zM618 346h1v1h-1zM824 213h1v1h-1zM556 133h1v1h-1zM391 465h1v1h-1zM206 438h1v1h-1zM597 332h1v1h-1zM721 120h1v1h-1zM309 14h1v1h-1zM165 266h1v1h-1zM824 478h1v1h-1zM803 266h1v1h-1zM742 399h1v1h-1zM948 266h1v1h-1zM927 54h1v1h-1zM309 279h1v1h-1zM412 133h1v1h-1zM927 319h1v1h-1zM309 306h1v1h-1zM21 266h1v1h-1zM927 346h1v1h-1zM659 266h1v1h-1zM227 200h1v1h-1zM618 94h1v1h-1zM268 399h1v1h-1zM515 505h1v1h-1zM906 399h1v1h-1zM412 492h1v1h-1zM227 465h1v1h-1zM618 359h1v1h-1zM103 160h1v1h-1zM927 40h1v1h-1zM309 27h1v1h-1zM144 67h1v1h-1zM721 200h1v1h-1zM103 425h1v1h-1zM927 67h1v1h-1zM144 332h1v1h-1zM886 133h1v1h-1zM721 465h1v1h-1zM103 452h1v1h-1zM536 200h1v1h-1zM927 332h1v1h-1zM515 226h1v1h-1zM618 80h1v1h-1zM721 492h1v1h-1zM0 67h1v1h-1zM515 253h1v1h-1zM618 107h1v1h-1zM206 1h1v1h-1zM597 133h1v1h-1zM247 200h1v1h-1zM515 518h1v1h-1zM742 133h1v1h-1zM412 505h1v1h-1zM968 67h1v1h-1zM206 266h1v1h-1zM721 186h1v1h-1zM103 173h1v1h-1zM989 266h1v1h-1zM968 332h1v1h-1zM824 306h1v1h-1zM206 293h1v1h-1zM206 531h1v1h-1zM453 399h1v1h-1zM721 213h1v1h-1zM103 438h1v1h-1zM62 266h1v1h-1zM721 478h1v1h-1zM309 372h1v1h-1zM700 266h1v1h-1zM515 239h1v1h-1zM906 133h1v1h-1zM21 332h1v1h-1zM412 226h1v1h-1zM474 67h1v1h-1zM309 399h1v1h-1zM1030 266h1v1h-1zM412 253h1v1h-1zM824 27h1v1h-1zM206 14h1v1h-1zM268 465h1v1h-1zM474 332h1v1h-1zM639 399h1v1h-1zM824 54h1v1h-1zM206 279h1v1h-1zM185 67h1v1h-1zM124 200h1v1h-1zM330 67h1v1h-1zM618 452h1v1h-1zM824 319h1v1h-1z" fill="#e0e0e0"/><defs><path id="bw" d="M-5.5 162.0L-5.2 163.2L-4.8 166.8L-4.5 172.6L-4.1 180.7L-3.8 190.7L-3.4 202.4L-3.1 215.7L-2.7 230.2L-2.4 245.5L-2.0 261.4L-1.7 277.5L-1.3 293.3L-1.0 308.7L-0.6 323.1L-0.3 336.4L0.1 348.2L0.4 358.2L0.8 366.2L1.1 372.1L1.5 375.7L1.8 376.9L2.1 375.7L2.5 372.1L2.8 366.2L3.2 358.2L3.5 348.2L3.9 336.5L4.2 323.2L4.6 308.8L4.9 293.4L5.3 277.6L5.6 261.6L6.0 245.7L6.3 230.4L6.7 215.9L7.0 202.7L7.4 190.9L7.7 180.9L8.1 172.9L8.4 167.1L8.8 163.5L9.1 162.3L9.4 163.5L9.8 167.0L10.1 172.9L10.5 180.9L10.8 190.8L11.2 202.5L11.5 215.8L11.9 230.1L12.2 245.4L12.6 261.2L12.9 277.2L13.3 293.0L13.6 308.3L14.0 322.7L14.3 335.9L14.7 347.6L15.0 357.5L15.4 365.5L15.7 371.4L16.1 374.9L16.4 376.1L16.7 374.9L17.1 371.4L17.4 365.6L17.8 357.6L18.1 347.7L18.5 336.1L18.8 323.0L19.2 308.6L19.5 293.5L19.9 277.7L20.2 261.9L20.6 246.1L20.9 231.0L21.3 216.7L21.6 203.5L22.0 191.9L22.3 182.0L22.7 174.0L23.0 168.2L23.4 164.7L23.7 163.5L24.0 164.6L24.4 167.8L24.7 173.0L25.1 180.3L25.4 189.3L25.8 199.9L26.1 212.0L26.4 225.2L26.8 239.3L27.1 254.0L27.5 269.1L27.8 284.1L28.2 298.8L28.5 312.9L28.8 326.1L29.2 338.2L29.5 348.8L29.9 357.8L30.2 365.1L30.6 370.3L30.9 373.5L31.2 374.6L31.6 373.5L31.9 370.4L32.3 365.1L32.6 358.0L33.0 349.0L33.3 338.5L33.7 326.5L34.0 313.4L34.3 299.4L34.7 284.8L35.0 270.0L35.4 255.1L35.7 240.5L36.1 226.5L36.4 213.4L36.7 201.4L37.1 190.9L37.4 181.9L37.8 174.8L38.1 169.5L38.5 166.4L38.8 165.3L39.1 166.4L39.5 169.5L39.8 174.7L40.2 181.8L40.5 190.8L40.8 201.3L41.2 213.2L41.5 226.2L41.9 240.1L42.2 254.7L42.6 269.5L42.9 284.3L43.2 298.9L43.6 312.8L43.9 325.8L44.3 337.7L44.6 348.2L44.9 357.2L45.3 364.3L45.6 369.5L46.0 372.6L46.3 373.7L46.6 372.6L47.0 369.5L47.3 364.3L47.7 357.2L48.0 348.2L48.3 337.7L48.7 325.8L49.0 312.8L49.4 298.9L49.7 284.3L50.1 269.5L50.4 254.7L50.7 240.1L51.1 226.2L51.4 213.2L51.8 201.3L52.1 190.8L52.4 181.8L52.8 174.7L53.1 169.5L53.5 166.4L53.8 165.3L54.1 166.4L54.5 169.5L54.8 174.8L55.2 181.9L55.5 190.9L55.8 201.4L56.2 213.4L56.5 226.5L56.8 240.5L57.2 255.1L57.5 270.0L57.9 284.8L58.2 299.4L58.5 313.4L58.9 326.5L59.2 338.5L59.6 349.0L59.9 358.0L60.2 365.1L60.6 370.4L60.9 373.5L61.2 374.6L61.6 373.5L61.9 370.3L62.3 365.1L62.6 357.8L62.9 348.8L63.3 338.2L63.6 326.1L64.0 312.9L64.3 298.8L64.6 284.1L65.0 269.1L65.3 254.0L65.7 239.3L66.0 225.2L66.3 212.0L66.7 199.9L67.0 189.3L67.3 180.3L67.7 173.0L68.0 167.8L68.4 164.6L68.7 163.5L69.0 164.7L69.4 168.2L69.7 174.1L70.1 182.0L70.4 191.9L70.7 203.6L71.1 216.8L71.4 231.1L71.7 246.4L72.1 262.1L72.4 278.0L72.8 293.8L73.1 309.0L73.4 323.4L73.8 336.5L74.1 348.2L74.4 358.1L74.8 366.1L75.1 371.9L75.5 375.5L75.8 376.6L76.1 375.4L76.5 371.9L76.8 366.0L77.2 357.9L77.5 347.9L77.8 336.1L78.2 322.8L78.5 308.3L78.8 292.9L79.2 277.0L79.5 260.9L79.9 245.0L80.2 229.6L80.5 215.1L80.9 201.8L81.2 190.0L81.5 179.9L81.9 171.9L82.2 166.0L82.6 162.4L82.9 161.2L83.2 162.5L83.6 166.5L83.9 173.0L84.3 181.9L84.6 193.0L85.0 206.0L85.3 220.5L85.7 236.2L86.0 252.8L86.4 269.8L86.7 286.8L87.1 303.4L87.4 319.1L87.8 333.6L88.1 346.6L88.5 357.7L88.8 366.6L89.2 373.1L89.5 377.1L89.9 378.4L90.2 377.1L90.5 373.1L90.9 366.5L91.2 357.5L91.6 346.4L91.9 333.4L92.3 318.8L92.6 302.9L93.0 286.3L93.3 269.2L93.7 252.1L94.0 235.5L94.4 219.6L94.7 205.0L95.1 192.0L95.4 180.9L95.8 171.9L96.1 165.3L96.5 161.3L96.8 160.0L97.1 161.4L97.5 165.4L97.8 172.0L98.2 181.0L98.5 192.2L98.8 205.3L99.2 220.0L99.5 236.0L99.9 252.8L100.2 269.9L100.5 287.1L100.9 303.9L101.2 319.9L101.6 334.6L101.9 347.7L102.2 358.9L102.6 367.9L102.9 374.5L103.3 378.5L103.6 379.9L103.9 378.5L104.3 374.5L104.6 367.8L105.0 358.7L105.3 347.4L105.6 334.2L106.0 319.4L106.3 303.3L106.7 286.4L107.0 269.0L107.3 251.7L107.7 234.8L108.0 218.7L108.4 203.9L108.7 190.7L109.0 179.4L109.4 170.3L109.7 163.6L110.1 159.6L110.4 158.2L110.7 165.3L111.1 176.7L111.4 190.2L111.8 205.1L112.1 220.8L112.4 237.0L112.8 253.3L113.1 269.5L113.5 285.4L113.8 300.9L114.1 315.8L114.5 330.0L114.8 343.3L115.2 355.7L115.5 367.2L115.8 377.6L116.2 387.0L116.5 395.2L116.9 402.3L117.2 408.3L117.5 413.2L117.9 417.0L118.2 419.6L118.6 421.2L118.9 421.7L119.2 419.8L119.6 416.0L119.9 410.9L120.2 404.9L120.6 398.2L120.9 387.8L121.2 377.0L121.6 369.6L121.9 363.6L122.2 357.9L122.6 351.2L122.9 341.9L123.2 331.0L123.6 321.2L123.9 314.8L124.2 309.8L124.6 305.5L124.9 301.8L125.2 298.1L125.6 294.6L125.9 291.3L126.2 288.1L126.6 285.3L126.9 282.8L127.2 280.8L127.6 279.1L127.9 277.6L128.2 276.3L128.6 275.0L128.9 273.8L129.2 272.8L129.6 271.8L129.9 271.0L130.2 270.3L130.6 269.7L130.9 269.3L131.2 268.9L131.6 268.5L131.9 268.2L132.2 267.9L132.6 267.6L132.9 267.4L133.2 267.1L133.6 266.9L133.9 266.6L134.2 266.2L134.6 265.9L134.9 265.5L135.2 265.1L135.6 264.8L135.9 264.4L136.2 264.0L136.6 263.6L136.9 263.2L137.2 262.8L137.6 262.3L137.9 261.8L138.2 261.2L138.6 260.6L138.9 260.0L139.2 259.3L139.6 258.5L139.9 257.5L140.2 256.3L140.6 254.7L140.9 252.8L141.2 250.7L141.6 248.5L141.9 246.1L142.2 243.1L142.6 239.7L142.9 235.9L143.2 231.9L143.6 227.7L143.9 222.8L144.2 216.5L144.6 206.4L144.9 191.3L145.2 178.0L145.6 168.1L145.9 159.3L146.2 151.5L146.6 144.7L146.9 138.5L147.2 132.5L147.6 126.9L147.9 121.8L148.2 117.2L148.6 113.3L148.9 110.2L149.2 110.4L149.6 111.3L149.9 113.2L150.2 116.5L150.6 121.5L150.9 128.1L151.3 136.7L151.6 147.2L151.9 159.6L152.3 173.8L152.6 189.7L152.9 207.1L153.3 225.8L153.6 245.2L154.0 265.2L154.3 285.1L154.6 304.5L155.0 322.9L155.3 339.8L155.6 354.6L156.0 366.7L156.3 375.9L156.7 381.6L157.0 383.5L157.3 381.5L157.7 375.8L158.0 366.3L158.4 353.6L158.7 338.0L159.0 320.0L159.4 300.3L159.7 279.5L160.1 258.4L160.4 237.6L160.8 217.9L161.1 199.9L161.4 184.3L161.8 171.6L162.1 162.1L162.5 156.4L162.8 154.4L163.1 156.0L163.5 160.6L163.8 168.2L164.1 178.6L164.5 191.5L164.8 206.5L165.1 223.1L165.5 241.1L165.8 259.8L166.1 278.8L166.5 297.5L166.8 315.5L167.1 332.1L167.5 347.1L167.8 360.0L168.1 370.4L168.5 378.0L168.8 382.6L169.1 384.2L169.5 382.6L169.8 378.0L170.2 370.4L170.5 360.1L170.8 347.2L171.2 332.3L171.5 315.7L171.8 297.8L172.2 279.2L172.5 260.2L172.8 241.6L173.2 223.7L173.5 207.1L173.8 192.2L174.2 179.3L174.5 169.0L174.8 161.4L175.2 156.8L175.5 155.2L175.8 156.8L176.2 161.4L176.5 169.0L176.8 179.3L177.2 192.1L177.5 207.0L177.9 223.6L178.2 241.4L178.5 260.1L178.9 278.9L179.2 297.6L179.5 315.4L179.9 332.0L180.2 346.9L180.6 359.7L180.9 370.0L181.2 377.6L181.6 382.2L181.9 383.8L182.2 382.2L182.6 377.6L182.9 370.0L183.2 359.7L183.6 346.9L183.9 332.0L184.3 315.4L184.6 297.6L184.9 278.9L185.3 260.1L185.6 241.4L185.9 223.6L186.3 207.0L186.6 192.1L187.0 179.3L187.3 169.0L187.6 161.4L188.0 156.8L188.3 155.2L188.7 156.9L189.0 162.1L189.4 170.5L189.7 181.9L190.1 196.0L190.4 212.4L190.8 230.4L191.1 249.7L191.5 269.5L191.8 289.3L192.2 308.6L192.5 326.6L192.9 343.0L193.2 357.1L193.6 368.5L193.9 376.9L194.2 382.1L194.6 383.8L195.0 382.1L195.3 376.9L195.7 368.5L196.0 357.1L196.4 343.0L196.7 326.6L197.1 308.6L197.4 289.3L197.8 269.5L198.1 249.7L198.4 230.4L198.8 212.4L199.1 196.0L199.5 181.9L199.8 170.5L200.2 162.1L200.5 156.9L200.9 155.2L201.2 156.8L201.6 161.4L201.9 169.0L202.3 179.3L202.6 192.1L203.0 207.0L203.3 223.6L203.6 241.4L204.0 260.1L204.3 278.9L204.7 297.6L205.0 315.4L205.3 332.0L205.7 346.9L206.0 359.7L206.4 370.0L206.7 377.6L207.1 382.2L207.4 383.8L207.7 382.2L208.1 377.6L208.4 370.0L208.8 359.7L209.1 346.9L209.5 332.0L209.8 315.4L210.1 297.6L210.5 278.9L210.8 260.1L211.2 241.4L211.5 223.6L211.8 207.0L212.2 192.1L212.5 179.3L212.9 169.0L213.2 161.4L213.6 156.8L213.9 155.2L214.2 156.8L214.6 161.4L214.9 169.0L215.3 179.3L215.6 192.1L215.9 207.0L216.3 223.6L216.6 241.4L217.0 260.1L217.3 278.9L217.6 297.6L218.0 315.4L218.3 332.0L218.7 346.9L219.0 359.7L219.3 370.0L219.7 377.6L220.0 382.2L220.3 383.8L220.7 382.2L221.0 377.6L221.4 370.0L221.7 359.7L222.0 346.9L222.4 332.0L222.7 315.4L223.1 297.6L223.4 278.9L223.7 260.1L224.1 241.4L224.4 223.6L224.8 207.0L225.1 192.1L225.4 179.3L225.8 169.0L226.1 161.4L226.5 156.8L226.8 155.2L227.1 156.9L227.5 162.1L227.8 170.5L228.2 182.0L228.5 196.1L228.9 212.5L229.2 230.5L229.6 249.8L229.9 269.7L230.2 289.6L230.6 308.9L230.9 327.0L231.3 343.3L231.6 357.4L232.0 368.9L232.3 377.3L232.7 382.5L233.0 384.2L233.3 382.5L233.7 377.3L234.0 368.8L234.4 357.3L234.7 343.2L235.1 326.8L235.4 308.6L235.8 289.3L236.1 269.3L236.4 249.3L236.8 230.0L237.1 211.9L237.5 195.4L237.8 181.3L238.2 169.8L238.5 161.3L238.9 156.1L239.2 154.4L239.5 156.0L239.9 160.6L240.2 168.3L240.5 178.7L240.9 191.5L241.2 206.5L241.6 223.3L241.9 241.2L242.2 260.0L242.6 279.0L242.9 297.8L243.2 315.7L243.6 332.5L243.9 347.5L244.3 360.3L244.6 370.7L244.9 378.4L245.3 383.0L245.6 384.6L245.9 383.0L246.3 378.4L246.6 370.7L246.9 360.3L247.3 347.5L247.6 332.5L248.0 315.7L248.3 297.8L248.6 279.0L249.0 260.0L249.3 241.2L249.6 223.3L250.0 206.5L250.3 191.5L250.7 178.7L251.0 168.3L251.3 160.6L251.7 156.0L252.0 154.4L252.3 156.0L252.7 160.7L253.0 168.3L253.4 178.7L253.7 191.7L254.0 206.7L254.4 223.5L254.7 241.5L255.1 260.3L255.4 279.4L255.7 298.2L256.1 316.2L256.4 333.0L256.8 348.0L257.1 361.0L257.4 371.4L257.8 379.0L258.1 383.7L258.5 385.3L258.8 383.7L259.1 379.0L259.5 371.3L259.8 360.8L260.1 347.8L260.5 332.7L260.8 315.8L261.2 297.7L261.5 278.7L261.8 259.6L262.2 240.6L262.5 222.5L262.9 205.6L263.2 190.5L263.5 177.5L263.9 167.0L264.2 159.3L264.6 154.6L264.9 153.0L265.2 154.6L265.6 159.3L265.9 167.1L266.2 177.6L266.6 190.7L266.9 205.9L267.3 222.8L267.6 241.1L267.9 260.1L268.3 279.3L268.6 298.3L268.9 316.6L269.3 333.5L269.6 348.7L270.0 361.8L270.3 372.3L270.6 380.1L271.0 384.8L271.3 386.4L271.6 384.8L272.0 380.1L272.3 372.3L272.6 361.7L273.0 348.6L273.3 333.3L273.7 316.3L274.0 298.0L274.3 279.0L274.7 259.6L275.0 240.6L275.3 222.3L275.7 205.3L276.0 190.0L276.4 176.9L276.7 166.3L277.0 158.5L277.4 153.8L277.7 152.2L278.0 153.8L278.4 158.6L278.7 166.3L279.1 176.9L279.4 190.1L279.8 205.3L280.1 222.4L280.5 240.7L280.8 259.8L281.1 279.2L281.5 298.3L281.8 316.6L282.2 333.7L282.5 348.9L282.9 362.1L283.2 372.7L283.6 380.4L283.9 385.2L284.2 386.8L284.6 385.2L284.9 380.4L285.3 372.7L285.6 362.1L286.0 348.9L286.3 333.7L286.7 316.6L287.0 298.3L287.4 279.2L287.7 259.8L288.0 240.7L288.4 222.4L288.7 205.3L289.1 190.1L289.4 176.9L289.8 166.3L290.1 158.6L290.5 153.8L290.8 152.2L291.1 153.8L291.5 158.5L291.8 166.3L292.2 176.9L292.5 190.0L292.8 205.3L293.2 222.3L293.5 240.6L293.9 259.6L294.2 279.0L294.5 298.0L294.9 316.3L295.2 333.3L295.6 348.6L295.9 361.7L296.2 372.3L296.6 380.1L296.9 384.8L297.2 386.4L297.6 384.8L297.9 380.1L298.3 372.3L298.6 361.8L298.9 348.7L299.3 333.5L299.6 316.6L300.0 298.3L300.3 279.3L300.6 260.1L301.0 241.1L301.3 222.8L301.7 205.9L302.0 190.7L302.3 177.6L302.7 167.1L303.0 159.3L303.4 154.6L303.7 153.0L304.0 154.6L304.4 159.3L304.7 167.0L305.1 177.6L305.4 190.6L305.8 205.8L306.1 222.7L306.5 240.9L306.8 259.9L307.1 279.1L307.5 298.1L307.8 316.3L308.2 333.2L308.5 348.4L308.9 361.4L309.2 372.0L309.6 379.7L309.9 384.4L310.2 386.0L310.6 384.4L310.9 379.7L311.3 372.0L311.6 361.4L312.0 348.4L312.3 333.2L312.7 316.3L313.0 298.1L313.4 279.1L313.7 259.9L314.0 240.9L314.4 222.7L314.7 205.8L315.1 190.6L315.4 177.6L315.8 167.0L316.1 159.3L316.5 154.6L316.8 153.0L317.1 154.6L317.5 159.3L317.8 167.0L318.2 177.6L318.5 190.6L318.8 205.8L319.2 222.7L319.5 240.9L319.9 259.9L320.2 279.1L320.5 298.1L320.9 316.3L321.2 333.2L321.6 348.4L321.9 361.4L322.2 372.0L322.6 379.7L322.9 384.4L323.2 386.0L323.6 384.4L323.9 379.7L324.3 372.0L324.6 361.4L324.9 348.4L325.3 333.2L325.6 316.3L326.0 298.1L326.3 279.1L326.6 259.9L327.0 240.9L327.3 222.7L327.7 205.8L328.0 190.6L328.3 177.6L328.7 167.0L329.0 159.3L329.4 154.6L329.7 153.0L330.0 154.6L330.4 159.3L330.7 167.0L331.1 177.6L331.4 190.6L331.8 205.8L332.1 222.7L332.5 240.9L332.8 259.9L333.1 279.1L333.5 298.1L333.8 316.3L334.2 333.2L334.5 348.4L334.9 361.4L335.2 372.0L335.6 379.7L335.9 384.4L336.2 386.0L336.6 384.4L336.9 379.7L337.3 372.0L337.6 361.4L338.0 348.4L338.3 333.2L338.7 316.3L339.0 298.1L339.4 279.1L339.7 259.9L340.0 240.9L340.4 222.7L340.7 205.8L341.1 190.6L341.4 177.6L341.8 167.0L342.1 159.3L342.5 154.6L342.8 153.0L343.1 154.6L343.5 159.3L343.8 167.0L344.2 177.5L344.5 190.5L344.8 205.6L345.2 222.5L345.5 240.6L345.9 259.5L346.2 278.7L346.5 297.6L346.9 315.7L347.2 332.6L347.6 347.7L347.9 360.7L348.2 371.2L348.6 378.9L348.9 383.6L349.2 385.2L349.6 383.6L349.9 379.0L350.3 371.3L350.6 360.9L350.9 348.0L351.3 333.0L351.6 316.2L352.0 298.2L352.3 279.4L352.6 260.4L353.0 241.6L353.3 223.6L353.7 206.8L354.0 191.8L354.3 178.9L354.7 168.5L355.0 160.8L355.4 156.2L355.7 154.6L356.0 156.0L356.4 160.2L356.7 167.1L357.1 176.5L357.4 188.2L357.8 201.8L358.1 217.1L358.5 233.8L358.8 251.2L359.2 269.2L359.5 287.1L359.8 304.5L360.2 321.2L360.5 336.5L360.9 350.1L361.2 361.8L361.6 371.2L361.9 378.1L362.3 382.3L362.6 383.7L362.9 382.3L363.3 378.1L363.6 371.3L364.0 362.0L364.3 350.4L364.7 336.8L365.0 321.5L365.4 305.0L365.7 287.7L366.0 269.9L366.4 252.0L366.7 234.7L367.1 218.2L367.4 202.9L367.8 189.3L368.1 177.7L368.5 168.4L368.8 161.6L369.2 157.4L369.5 156.0L369.8 157.4L370.2 161.5L370.5 168.3L370.9 177.6L371.2 189.2L371.5 202.7L371.9 217.9L372.2 234.3L372.6 251.6L372.9 269.3L373.2 287.0L373.6 304.3L373.9 320.7L374.3 335.9L374.6 349.4L374.9 361.0L375.3 370.3L375.6 377.1L376.0 381.2L376.3 382.6L376.6 381.2L377.0 377.1L377.3 370.3L377.7 361.0L378.0 349.5L378.3 336.1L378.7 321.0L379.0 304.6L379.4 287.4L379.7 269.7L380.0 252.0L380.4 234.8L380.7 218.4L381.1 203.3L381.4 189.9L381.7 178.4L382.1 169.1L382.4 162.3L382.8 158.2L383.1 156.8L383.4 158.2L383.8 162.3L384.1 169.0L384.5 178.2L384.8 189.6L385.1 203.0L385.5 217.9L385.8 234.2L386.2 251.3L386.5 268.8L386.8 286.3L387.2 303.4L387.5 319.6L387.9 334.6L388.2 348.0L388.5 359.4L388.9 368.5L389.2 375.3L389.6 379.4L389.9 380.8L390.2 379.4L390.6 375.3L390.9 368.7L391.3 359.6L391.6 348.4L391.9 335.2L392.3 320.4L392.6 304.4L393.0 287.5L393.3 270.2L393.6 252.9L394.0 236.1L394.3 220.0L394.7 205.3L395.0 192.1L395.3 180.8L395.7 171.7L396.0 165.1L396.4 161.1L396.7 159.7L397.0 160.8L397.4 164.1L397.7 169.6L398.0 177.0L398.4 186.4L398.7 197.4L399.0 209.9L399.4 223.6L399.7 238.2L400.0 253.4L400.4 268.9L400.7 284.5L401.0 299.7L401.4 314.3L401.7 328.0L402.0 340.5L402.4 351.5L402.7 360.8L403.0 368.3L403.4 373.7L403.7 377.0L404.0 378.1L404.4 377.0L404.7 373.8L405.1 368.4L405.4 361.0L405.7 351.8L406.1 340.8L406.4 328.5L406.7 315.0L407.1 300.5L407.4 285.5L407.7 270.1L408.1 254.7L408.4 239.6L408.7 225.2L409.1 211.6L409.4 199.3L409.7 188.4L410.1 179.2L410.4 171.8L410.7 166.4L411.1 163.1L411.4 162.0L411.7 163.2L412.1 166.7L412.4 172.6L412.8 180.6L413.1 190.5L413.5 202.2L413.8 215.4L414.2 229.8L414.5 245.0L414.9 260.8L415.2 276.8L415.6 292.6L415.9 307.8L416.3 322.2L416.6 335.4L417.0 347.1L417.3 357.0L417.7 365.0L418.0 370.9L418.4 374.4L418.7 375.6L419.0 374.4L419.4 370.9L419.7 365.2L420.1 357.3L420.4 347.5L420.8 335.9L421.1 322.9L421.5 308.7L421.8 293.7L422.2 278.1L422.5 262.3L422.9 246.7L423.2 231.7L423.6 217.5L423.9 204.5L424.3 192.9L424.6 183.1L425.0 175.2L425.3 169.5L425.7 166.0L426.0 164.8L426.3 165.9L426.7 169.0L427.0 174.2L427.4 181.4L427.7 190.3L428.0 200.8L428.4 212.7L428.7 225.8L429.1 239.7L429.4 254.3L429.8 269.1L430.1 284.0L430.4 298.5L430.8 312.5L431.1 325.5L431.5 337.4L431.8 348.0L432.1 356.9L432.5 364.0L432.8 369.2L433.2 372.4L433.5 373.4L433.8 372.4L434.2 369.3L434.5 364.1L434.9 357.0L435.2 348.2L435.5 337.7L435.9 325.9L436.2 312.9L436.6 299.1L436.9 284.6L437.2 269.9L437.6 255.1L437.9 240.7L438.3 226.8L438.6 213.9L439.0 202.0L439.3 191.6L439.6 182.7L440.0 175.7L440.3 170.5L440.7 167.4L441.0 166.3L441.3 167.4L441.7 170.5L442.0 175.7L442.4 182.7L442.7 191.6L443.1 202.0L443.4 213.9L443.8 226.8L444.1 240.7L444.5 255.1L444.8 269.9L445.2 284.6L445.5 299.1L445.9 312.9L446.2 325.9L446.6 337.7L446.9 348.2L447.3 357.0L447.6 364.1L448.0 369.3L448.3 372.4L448.6 373.4L449.0 372.4L449.3 369.2L449.7 364.0L450.0 356.9L450.4 348.0L450.7 337.4L451.1 325.5L451.4 312.5L451.8 298.5L452.1 284.0L452.5 269.1L452.8 254.3L453.2 239.7L453.5 225.8L453.9 212.7L454.2 200.8L454.6 190.3L454.9 181.4L455.3 174.2L455.6 169.0L456.0 165.9L456.3 164.8L456.6 165.9L457.0 169.1L457.3 174.3L457.6 181.5L458.0 190.5L458.3 201.1L458.6 213.1L459.0 226.3L459.3 240.4L459.6 255.1L460.0 270.0L460.3 285.0L460.6 299.7L461.0 313.8L461.3 327.0L461.6 339.0L462.0 349.6L462.3 358.6L462.6 365.8L463.0 371.0L463.3 374.2L463.6 375.3L464.0 374.2L464.3 371.0L464.7 365.7L465.0 358.4L465.3 349.3L465.7 338.6L466.0 326.4L466.3 313.1L466.7 298.9L467.0 284.1L467.3 268.9L467.7 253.8L468.0 239.0L468.3 224.8L468.7 211.5L469.0 199.3L469.3 188.6L469.7 179.5L470.0 172.2L470.3 166.9L470.7 163.7L471.0 162.6L471.3 163.8L471.7 167.4L472.0 173.2L472.4 181.3L472.7 191.3L473.1 203.1L473.4 216.3L473.8 230.8L474.1 246.1L474.5 262.0L474.8 278.1L475.2 294.0L475.5 309.3L475.9 323.8L476.2 337.0L476.6 348.8L476.9 358.8L477.3 366.9L477.6 372.7L478.0 376.3L478.3 377.5L478.6 376.3L479.0 372.7L479.3 366.8L479.7 358.6L480.0 348.5L480.4 336.6L480.7 323.2L481.1 308.6L481.4 293.1L481.8 277.1L482.1 260.8L482.5 244.8L482.8 229.3L483.2 214.7L483.5 201.3L483.9 189.4L484.2 179.3L484.6 171.1L484.9 165.2L485.3 161.6L485.6 160.4L485.9 161.8L486.3 165.8L486.6 172.4L487.0 181.4L487.3 192.6L487.7 205.7L488.0 220.5L488.4 236.4L488.7 253.2L489.1 270.4L489.4 287.6L489.8 304.4L490.1 320.3L490.5 335.1L490.8 348.2L491.2 359.4L491.5 368.4L491.9 375.0L492.2 379.0L492.5 380.4L492.9 379.0L493.2 374.9L493.6 368.2L493.9 359.0L494.3 347.7L494.6 334.3L495.0 319.4L495.3 303.1L495.7 286.1L496.0 268.6L496.4 251.1L496.7 234.1L497.1 217.8L497.4 202.9L497.8 189.5L498.1 178.2L498.5 169.0L498.8 162.3L499.2 158.2L499.5 156.8L499.8 158.3L500.2 162.9L500.5 170.4L500.9 180.7L501.2 193.3L501.6 208.1L501.9 224.6L502.3 242.2L502.6 260.7L503.0 279.4L503.3 297.9L503.7 315.5L504.0 332.0L504.4 346.8L504.7 359.4L505.1 369.7L505.4 377.2L505.8 381.8L506.1 383.3L506.4 381.7L506.8 377.1L507.1 369.5L507.5 359.2L507.8 346.4L508.2 331.5L508.5 314.9L508.9 297.0L509.2 278.4L509.6 259.5L509.9 240.9L510.3 223.0L510.6 206.4L511.0 191.5L511.3 178.7L511.7 168.4L512.0 160.8L512.4 156.2L512.7 154.6L513.0 156.2L513.4 160.8L513.7 168.5L514.1 178.9L514.4 191.8L514.8 206.8L515.1 223.6L515.5 241.6L515.8 260.4L516.1 279.4L516.5 298.2L516.8 316.2L517.2 333.0L517.5 348.0L517.9 360.9L518.2 371.3L518.6 379.0L518.9 383.6L519.2 385.2L519.6 383.6L519.9 378.9L520.3 371.2L520.6 360.7L521.0 347.7L521.3 332.6L521.7 315.7L522.0 297.6L522.4 278.7L522.7 259.5L523.0 240.6L523.4 222.5L523.7 205.6L524.1 190.5L524.4 177.5L524.8 167.0L525.1 159.3L525.5 154.6L525.8 153.0L526.1 154.6L526.5 159.3L526.8 167.1L527.2 177.6L527.5 190.6L527.9 205.8L528.2 222.8L528.6 241.0L528.9 260.0L529.3 279.3L529.6 298.3L530.0 316.5L530.3 333.5L530.7 348.7L531.0 361.7L531.4 372.2L531.7 380.0L532.1 384.7L532.4 386.3L532.7 384.7L533.1 380.0L533.4 372.2L533.8 361.6L534.1 348.6L534.5 333.3L534.8 316.3L535.2 298.1L535.5 279.0L535.9 259.7L536.2 240.6L536.6 222.4L536.9 205.4L537.3 190.1L537.6 177.1L538.0 166.5L538.3 158.7L538.7 154.0L539.0 152.4L539.3 154.0L539.7 158.8L540.0 166.6L540.3 177.2L540.7 190.3L541.0 205.6L541.4 222.7L541.7 241.0L542.0 260.2L542.4 279.6L542.7 298.7L543.0 317.1L543.4 334.1L543.7 349.4L544.1 362.6L544.4 373.2L544.7 381.0L545.1 385.7L545.4 387.4L545.7 385.7L546.1 380.9L546.4 373.1L546.7 362.4L547.1 349.2L547.4 333.8L547.8 316.6L548.1 298.1L548.4 278.9L548.8 259.4L549.1 240.1L549.4 221.6L549.8 204.5L550.1 189.1L550.5 175.8L550.8 165.1L551.1 157.3L551.5 152.5L551.8 150.9L552.1 152.5L552.5 157.3L552.8 165.2L553.2 175.9L553.5 189.2L553.9 204.7L554.2 222.0L554.6 240.5L554.9 259.9L555.3 279.5L555.6 298.8L556.0 317.4L556.3 334.6L556.7 350.1L557.0 363.4L557.4 374.1L557.7 382.0L558.1 386.8L558.4 388.5L558.7 386.8L559.1 382.0L559.4 374.1L559.8 363.3L560.1 350.0L560.5 334.5L560.8 317.2L561.2 298.6L561.5 279.2L561.9 259.5L562.2 240.1L562.6 221.5L562.9 204.2L563.3 188.6L563.6 175.3L564.0 164.6L564.3 156.7L564.7 151.8L565.0 150.2L565.3 151.8L565.7 156.7L566.0 164.6L566.3 175.4L566.7 188.8L567.0 204.3L567.4 221.7L567.7 240.4L568.0 259.8L568.4 279.6L568.7 299.0L569.0 317.7L569.4 335.1L569.7 350.6L570.1 364.0L570.4 374.8L570.7 382.7L571.1 387.6L571.4 389.2L571.7 387.6L572.1 382.7L572.4 374.7L572.7 363.9L573.1 350.5L573.4 334.9L573.8 317.5L574.1 298.7L574.4 279.2L574.8 259.4L575.1 239.9L575.4 221.1L575.8 203.7L576.1 188.1L576.5 174.7L576.8 163.9L577.1 155.9L577.5 151.0L577.8 149.4L578.1 151.0L578.5 155.9L578.8 163.9L579.1 174.7L579.5 188.2L579.8 203.8L580.2 221.3L580.5 240.0L580.8 259.6L581.2 279.4L581.5 299.0L581.8 317.7L582.2 335.2L582.5 350.8L582.9 364.3L583.2 375.1L583.5 383.1L583.9 388.0L584.2 389.6L584.5 388.0L584.9 383.1L585.2 375.1L585.5 364.3L585.9 350.8L586.2 335.2L586.6 317.7L586.9 299.0L587.2 279.4L587.6 259.6L587.9 240.0L588.2 221.3L588.6 203.8L588.9 188.2L589.3 174.7L589.6 163.9L589.9 155.9L590.3 151.0L590.6 149.4L590.9 151.0L591.3 155.9L591.6 163.9L591.9 174.7L592.3 188.2L592.6 203.8L593.0 221.3L593.3 240.0L593.6 259.6L594.0 279.4L594.3 299.0L594.6 317.7L595.0 335.2L595.3 350.8L595.7 364.3L596.0 375.1L596.3 383.1L596.7 388.0L597.0 389.6L597.3 388.0L597.7 383.1L598.0 375.1L598.3 364.3L598.7 350.8L599.0 335.2L599.4 317.7L599.7 299.0L600.0 279.4L600.4 259.6L600.7 240.0L601.0 221.3L601.4 203.8L601.7 188.2L602.1 174.7L602.4 163.9L602.7 155.9L603.1 151.0L603.4 149.4L603.7 151.0L604.1 155.9L604.4 163.9L604.7 174.7L605.1 188.2L605.4 203.8L605.7 221.3L606.1 240.0L606.4 259.6L606.7 279.4L607.1 299.0L607.4 317.7L607.7 335.2L608.1 350.8L608.4 364.3L608.7 375.1L609.1 383.1L609.4 388.0L609.8 389.6L610.1 388.0L610.4 383.1L610.8 375.1L611.1 364.3L611.4 350.8L611.8 335.2L612.1 317.7L612.4 299.0L612.8 279.4L613.1 259.6L613.4 240.0L613.8 221.3L614.1 203.8L614.4 188.2L614.8 174.7L615.1 163.9L615.4 155.9L615.8 151.0L616.1 149.4L616.4 151.0L616.8 155.9L617.1 163.9L617.5 174.7L617.8 188.2L618.1 203.8L618.5 221.3L618.8 240.0L619.2 259.6L619.5 279.4L619.8 299.0L620.2 317.7L620.5 335.2L620.9 350.8L621.2 364.3L621.5 375.1L621.9 383.1L622.2 388.0L622.5 389.6L622.9 388.0L623.2 383.1L623.6 375.1L623.9 364.3L624.2 350.8L624.6 335.2L624.9 317.7L625.3 299.0L625.6 279.4L625.9 259.6L626.3 240.0L626.6 221.3L627.0 203.8L627.3 188.2L627.6 174.7L628.0 163.9L628.3 155.9L628.7 151.0L629.0 149.4L629.3 151.0L629.7 155.9L630.0 163.9L630.3 174.7L630.7 188.1L631.0 203.7L631.3 221.1L631.7 239.9L632.0 259.4L632.3 279.2L632.7 298.7L633.0 317.5L633.3 334.9L633.7 350.5L634.0 363.9L634.3 374.7L634.7 382.7L635.0 387.6L635.4 389.2L635.7 387.6L636.0 382.7L636.4 374.8L636.7 364.0L637.0 350.6L637.4 335.1L637.7 317.7L638.0 299.0L638.4 279.6L638.7 259.8L639.0 240.4L639.4 221.7L639.7 204.3L640.0 188.8L640.4 175.4L640.7 164.6L641.0 156.7L641.4 151.8L641.7 150.2L642.1 152.0L642.4 157.4L642.8 166.1L643.1 178.0L643.5 192.7L643.8 209.7L644.1 228.5L644.5 248.5L644.9 269.1L645.2 289.8L645.6 309.8L645.9 328.6L646.2 345.6L646.6 360.3L647.0 372.2L647.3 380.9L647.6 386.3L648.0 388.1L648.4 386.3L648.7 381.0L649.0 372.3L649.4 360.4L649.8 345.9L650.1 329.0L650.4 310.3L650.8 290.4L651.1 269.9L651.5 249.3L651.9 229.4L652.2 210.7L652.5 193.8L652.9 179.3L653.2 167.4L653.6 158.7L653.9 153.4L654.3 151.6L654.6 153.2L655.0 158.0L655.3 165.9L655.6 176.5L656.0 189.8L656.3 205.2L656.6 222.3L657.0 240.8L657.3 260.1L657.6 279.6L658.0 298.9L658.3 317.4L658.6 334.5L659.0 349.9L659.3 363.2L659.6 373.8L660.0 381.7L660.3 386.5L660.6 388.1L661.0 386.5L661.3 381.7L661.7 373.8L662.0 363.0L662.3 349.7L662.7 334.2L663.0 316.9L663.3 298.4L663.7 279.0L664.0 259.3L664.3 239.9L664.7 221.4L665.0 204.1L665.3 188.6L665.7 175.3L666.0 164.5L666.3 156.6L666.7 151.8L667.0 150.2L667.3 151.8L667.7 156.7L668.0 164.6L668.4 175.4L668.7 188.7L669.0 204.2L669.4 221.6L669.7 240.2L670.1 259.6L670.4 279.4L670.7 298.8L671.1 317.4L671.4 334.8L671.8 350.3L672.1 363.6L672.4 374.4L672.8 382.3L673.1 387.2L673.5 388.8L673.8 387.2L674.1 382.3L674.5 374.4L674.8 363.6L675.1 350.3L675.5 334.8L675.8 317.4L676.2 298.8L676.5 279.4L676.8 259.6L677.2 240.2L677.5 221.6L677.9 204.2L678.2 188.7L678.5 175.4L678.9 164.6L679.2 156.7L679.6 151.8L679.9 150.2L680.2 151.8L680.6 156.7L680.9 164.6L681.2 175.4L681.6 188.7L681.9 204.2L682.3 221.6L682.6 240.2L682.9 259.6L683.3 279.4L683.6 298.8L683.9 317.4L684.3 334.8L684.6 350.3L685.0 363.6L685.3 374.4L685.6 382.3L686.0 387.2L686.3 388.8L686.6 387.2L687.0 382.3L687.3 374.4L687.6 363.6L688.0 350.3L688.3 334.8L688.7 317.4L689.0 298.8L689.3 279.4L689.7 259.6L690.0 240.2L690.3 221.6L690.7 204.2L691.0 188.7L691.4 175.4L691.7 164.6L692.0 156.7L692.4 151.8L692.7 150.2L693.0 151.8L693.4 156.7L693.7 164.6L694.1 175.3L694.4 188.6L694.8 204.2L695.1 221.5L695.5 240.1L695.8 259.5L696.1 279.1L696.5 298.5L696.8 317.1L697.2 334.4L697.5 350.0L697.9 363.3L698.2 374.0L698.6 381.9L698.9 386.8L699.2 388.4L699.6 386.8L699.9 382.0L700.3 374.1L700.6 363.4L701.0 350.1L701.3 334.6L701.7 317.4L702.0 298.8L702.4 279.5L702.7 259.9L703.0 240.6L703.4 222.0L703.7 204.8L704.1 189.3L704.4 176.0L704.8 165.3L705.1 157.4L705.5 152.6L705.8 151.0L706.1 152.6L706.5 157.4L706.8 165.3L707.2 176.0L707.5 189.2L707.8 204.6L708.2 221.8L708.5 240.3L708.9 259.6L709.2 279.1L709.5 298.4L709.9 316.9L710.2 334.1L710.6 349.5L710.9 362.7L711.2 373.4L711.6 381.3L711.9 386.1L712.2 387.7L712.6 386.1L712.9 381.3L713.3 373.5L713.6 362.8L713.9 349.6L714.3 334.2L714.6 317.1L715.0 298.6L715.3 279.4L715.6 259.9L716.0 240.7L716.3 222.2L716.7 205.1L717.0 189.7L717.3 176.5L717.7 165.8L718.0 158.0L718.4 153.2L718.7 151.6L719.0 153.2L719.4 158.0L719.7 165.8L720.1 176.4L720.4 189.5L720.8 204.9L721.1 221.9L721.5 240.3L721.8 259.4L722.1 278.9L722.5 298.0L722.8 316.4L723.2 333.4L723.5 348.8L723.9 361.9L724.2 372.5L724.6 380.3L724.9 385.1L725.2 386.7L725.6 385.1L725.9 380.4L726.3 372.6L726.6 362.1L727.0 349.0L727.3 333.8L727.7 316.8L728.0 298.5L728.4 279.5L728.7 260.2L729.0 241.2L729.4 222.9L729.7 205.9L730.1 190.7L730.4 177.6L730.8 167.1L731.1 159.3L731.5 154.6L731.8 153.0L732.1 154.6L732.5 159.3L732.8 167.0L733.2 177.5L733.5 190.5L733.9 205.7L734.2 222.6L734.6 240.7L734.9 259.7L735.2 278.8L735.6 297.8L735.9 315.9L736.3 332.8L736.6 348.0L737.0 361.0L737.3 371.5L737.7 379.2L738.0 383.9L738.3 385.5L738.7 383.9L739.0 379.2L739.4 371.5L739.7 361.1L740.1 348.1L740.4 333.1L740.8 316.2L741.1 298.2L741.5 279.3L741.8 260.2L742.1 241.3L742.5 223.3L742.8 206.4L743.2 191.4L743.5 178.4L743.9 168.0L744.2 160.3L744.6 155.6L744.9 154.0L745.2 155.6L745.6 160.2L745.9 167.9L746.3 178.3L746.6 191.2L746.9 206.3L747.3 223.0L747.6 241.0L748.0 259.8L748.3 278.9L748.6 297.7L749.0 315.7L749.3 332.4L749.7 347.5L750.0 360.4L750.3 370.8L750.7 378.5L751.0 383.1L751.3 384.7L751.7 383.1L752.0 378.5L752.4 370.8L752.7 360.4L753.0 347.6L753.4 332.6L753.7 315.9L754.1 297.9L754.4 279.2L754.7 260.1L755.1 241.4L755.4 223.4L755.8 206.7L756.1 191.7L756.4 178.9L756.8 168.5L757.1 160.8L757.5 156.2L757.8 154.6L758.1 156.0L758.5 160.2L758.8 167.1L759.2 176.4L759.5 188.1L759.9 201.7L760.2 217.0L760.6 233.6L760.9 251.1L761.3 268.9L761.6 286.8L762.0 304.3L762.3 320.9L762.7 336.2L763.0 349.8L763.4 361.5L763.7 370.8L764.1 377.7L764.4 381.9L764.8 383.3L765.1 381.9L765.4 377.8L765.8 371.0L766.1 361.7L766.5 350.1L766.8 336.6L767.2 321.5L767.5 305.0L767.9 287.8L768.2 270.0L768.6 252.3L768.9 235.1L769.3 218.6L769.6 203.5L770.0 190.0L770.3 178.4L770.7 169.1L771.0 162.3L771.4 158.2L771.7 156.8L772.0 158.2L772.4 162.3L772.7 169.0L773.0 178.3L773.4 189.7L773.7 203.1L774.0 218.1L774.4 234.4L774.7 251.6L775.1 269.1L775.4 286.7L775.7 303.9L776.1 320.2L776.4 335.2L776.7 348.6L777.1 360.0L777.4 369.3L777.7 376.0L778.1 380.1L778.4 381.5L778.7 380.1L779.1 376.0L779.4 369.3L779.7 360.2L780.1 348.8L780.4 335.5L780.7 320.5L781.1 304.4L781.4 287.3L781.8 269.9L782.1 252.4L782.4 235.3L782.8 219.2L783.1 204.2L783.4 190.9L783.8 179.5L784.1 170.4L784.4 163.7L784.8 159.6L785.1 158.2L785.4 159.6L785.8 163.6L786.1 170.2L786.5 179.3L786.8 190.6L787.2 203.8L787.5 218.6L787.9 234.6L788.2 251.5L788.6 268.8L788.9 286.0L789.3 302.9L789.6 318.9L790.0 333.7L790.3 346.9L790.7 358.2L791.0 367.3L791.4 373.9L791.7 377.9L792.0 379.3L792.4 378.0L792.7 374.0L793.1 367.4L793.4 358.5L793.8 347.4L794.1 334.3L794.5 319.8L794.8 303.9L795.2 287.3L795.5 270.2L795.9 253.2L796.2 236.6L796.6 220.7L796.9 206.2L797.3 193.1L797.6 182.0L798.0 173.1L798.3 166.5L798.7 162.5L799.0 161.2L799.3 162.4L799.7 166.0L800.0 171.9L800.4 179.9L800.7 190.0L801.1 201.8L801.4 215.1L801.7 229.6L802.1 245.0L802.4 260.9L802.8 277.0L803.1 292.9L803.5 308.3L803.8 322.8L804.1 336.1L804.5 347.9L804.8 358.0L805.2 366.0L805.5 371.9L805.9 375.5L806.2 376.7L806.5 375.5L806.9 372.0L807.2 366.1L807.6 358.2L807.9 348.2L808.3 336.5L808.6 323.4L808.9 309.0L809.3 293.8L809.6 278.0L810.0 262.1L810.3 246.3L810.7 231.1L811.0 216.7L811.3 203.6L811.7 191.9L812.0 181.9L812.4 174.0L812.7 168.1L813.1 164.6L813.4 163.4L813.7 164.6L814.1 168.1L814.4 173.9L814.8 181.8L815.1 191.7L815.5 203.3L815.8 216.4L816.2 230.6L816.5 245.8L816.9 261.4L817.2 277.3L817.6 292.9L817.9 308.1L818.3 322.3L818.6 335.4L819.0 347.0L819.3 356.9L819.7 364.8L820.0 370.6L820.4 374.1L820.7 375.3L821.0 374.1L821.4 370.6L821.7 364.8L822.1 356.9L822.4 347.1L822.8 335.5L823.1 322.5L823.5 308.2L823.8 293.2L824.2 277.5L824.5 261.8L824.9 246.1L825.2 231.1L825.6 216.8L825.9 203.8L826.3 192.2L826.6 182.4L827.0 174.5L827.3 168.7L827.7 165.2L828.0 164.0L828.3 165.1L828.7 168.3L829.0 173.5L829.3 180.7L829.7 189.6L830.0 200.2L830.3 212.2L830.7 225.3L831.0 239.4L831.3 254.0L831.7 268.9L832.0 283.9L832.3 298.5L832.7 312.5L833.0 325.7L833.3 337.6L833.7 348.2L834.0 357.2L834.3 364.4L834.7 369.6L835.0 372.8L835.3 373.9L835.7 372.8L836.0 369.6L836.4 364.5L836.7 357.4L837.0 348.5L837.4 338.0L837.7 326.2L838.0 313.2L838.4 299.3L838.7 284.8L839.0 270.1L839.4 255.3L839.7 240.8L840.0 227.0L840.4 214.0L840.7 202.1L841.0 191.6L841.4 182.8L841.7 175.7L842.0 170.5L842.4 167.4L842.7 166.3L843.0 167.4L843.4 170.5L843.7 175.6L844.1 182.7L844.4 191.5L844.8 201.9L845.1 213.7L845.4 226.6L845.8 240.4L846.1 254.8L846.5 269.5L846.8 284.2L847.2 298.6L847.5 312.4L847.8 325.3L848.2 337.1L848.5 347.5L848.9 356.3L849.2 363.4L849.6 368.5L849.9 371.6L850.2 372.7L850.6 371.6L850.9 368.5L851.3 363.4L851.6 356.3L852.0 347.5L852.3 337.1L852.7 325.3L853.0 312.4L853.3 298.6L853.7 284.2L854.0 269.5L854.4 254.8L854.7 240.4L855.1 226.6L855.4 213.7L855.7 201.9L856.1 191.5L856.4 182.7L856.8 175.6L857.1 170.5L857.5 167.4L857.8 166.3L858.1 167.4L858.5 170.5L858.8 175.7L859.2 182.8L859.5 191.6L859.8 202.1L860.2 214.0L860.5 227.0L860.8 240.8L861.2 255.3L861.5 270.1L861.9 284.8L862.2 299.3L862.5 313.2L862.9 326.2L863.2 338.0L863.6 348.5L863.9 357.4L864.2 364.5L864.6 369.6L864.9 372.8L865.2 373.9L865.6 372.8L865.9 369.6L866.3 364.4L866.6 357.2L866.9 348.2L867.3 337.6L867.6 325.7L868.0 312.5L868.3 298.5L868.6 283.9L869.0 268.9L869.3 254.0L869.7 239.4L870.0 225.3L870.3 212.2L870.7 200.2L871.0 189.6L871.3 180.7L871.7 173.5L872.0 168.3L872.4 165.1L872.7 164.0L873.0 165.2L873.4 168.7L873.7 174.5L874.1 182.4L874.4 192.3L874.7 203.9L875.1 217.0L875.4 231.2L875.8 246.4L876.1 262.0L876.4 277.8L876.8 293.5L877.1 308.6L877.5 322.9L877.8 336.0L878.1 347.6L878.5 357.4L878.8 365.4L879.2 371.1L879.5 374.7L879.8 375.9L880.2 374.7L880.5 371.1L880.9 365.3L881.2 357.3L881.6 347.3L881.9 335.6L882.2 322.5L882.6 308.1L882.9 292.8L883.3 277.1L883.6 261.1L883.9 245.3L884.3 230.1L884.6 215.7L885.0 202.5L885.3 190.8L885.6 180.9L886.0 172.9L886.3 167.0L886.7 163.5L887.0 162.3L887.3 163.5L887.7 167.1L888.0 172.9L888.3 181.0L888.7 191.0L889.0 202.8L889.3 216.0L889.7 230.5L890.0 245.9L890.3 261.8L890.7 277.8L891.0 293.7L891.3 309.1L891.7 323.5L892.0 336.8L892.3 348.6L892.7 358.6L893.0 366.7L893.3 372.5L893.7 376.1L894.0 377.3L894.3 376.1L894.7 372.5L895.0 366.6L895.3 358.5L895.7 348.4L896.0 336.6L896.3 323.2L896.7 308.7L897.0 293.3L897.3 277.3L897.7 261.1L898.0 245.1L898.3 229.7L898.7 215.2L899.0 201.8L899.3 190.0L899.7 179.9L900.0 171.8L900.3 165.9L900.7 162.3L901.0 161.1L901.3 162.4L901.7 166.4L902.0 173.0L902.3 181.9L902.7 193.0L903.0 206.0L903.4 220.5L903.7 236.3L904.0 252.9L904.4 269.9L904.7 286.9L905.0 303.6L905.4 319.3L905.7 333.9L906.1 346.9L906.4 358.0L906.7 366.9L907.1 373.4L907.4 377.4L907.8 378.8L908.1 377.4L908.4 373.4L908.8 366.8L909.1 357.8L909.4 346.6L909.8 333.5L910.1 318.9L910.5 303.0L910.8 286.2L911.1 269.1L911.5 251.9L911.8 235.2L912.1 219.3L912.5 204.6L912.8 191.5L913.2 180.3L913.5 171.4L913.8 164.8L914.2 160.8L914.5 159.4L914.8 166.9L915.2 178.8L915.5 193.0L915.9 208.6L916.2 225.0L916.6 241.8L916.9 258.7L917.3 275.4L917.6 291.8L918.0 307.6L918.3 322.7L918.7 336.9L919.0 350.3L919.3 362.6L919.7 373.8L920.0 383.9L920.4 392.8L920.7 400.5L921.1 407.0L921.4 412.2L921.8 416.3L922.1 419.1L922.5 420.8L922.8 421.4L923.1 419.5L923.5 415.7L923.8 410.7L924.1 404.7L924.5 398.0L924.8 387.7L925.1 376.9L925.5 369.5L925.8 363.6L926.1 357.9L926.5 351.3L926.8 342.0L927.1 331.1L927.5 321.4L927.8 315.0L928.2 310.0L928.5 305.8L928.8 302.0L929.2 298.4L929.5 294.9L929.8 291.6L930.2 288.5L930.5 285.7L930.8 283.2L931.2 281.2L931.5 279.5L931.8 278.0L932.2 276.7L932.5 275.4L932.8 274.2L933.2 273.2L933.5 272.3L933.8 271.4L934.2 270.7L934.5 270.2L934.8 269.7L935.2 269.3L935.5 268.9L935.8 268.6L936.2 268.3L936.5 268.1L936.8 267.8L937.2 267.6L937.5 267.3L937.8 267.0L938.2 266.7L938.5 266.3L938.9 265.9L939.2 265.6L939.5 265.2L939.9 264.9L940.2 264.5L940.5 264.1L940.9 263.7L941.2 263.2L941.5 262.8L941.9 262.3L942.2 261.7L942.5 261.1L942.9 260.5L943.2 259.7L943.5 259.0L943.9 258.0L944.2 256.8L944.5 255.2L944.9 253.3L945.2 251.3L945.5 249.0L945.9 246.6L946.2 243.6L946.5 240.2L946.9 236.5L947.2 232.5L947.5 228.4L947.9 223.5L948.2 217.2L948.6 207.1L948.9 192.1L949.2 178.9L949.6 169.0L949.9 160.2L950.2 152.5L950.6 145.8L950.9 139.5L951.2 133.6L951.6 128.0L951.9 122.9L952.2 118.4L952.6 114.5L952.9 111.4L953.2 111.6L953.6 112.7L953.9 115.2L954.3 119.3L954.6 125.4L955.0 133.7L955.3 144.2L955.7 157.0L956.0 172.0L956.4 189.1L956.7 207.9L957.0 228.2L957.4 249.4L957.7 271.1L958.1 292.7L958.4 313.4L958.8 332.6L959.1 349.6L959.5 363.8L959.8 374.5L960.2 381.2L960.5 383.5L960.8 381.8L961.2 376.6L961.5 368.2L961.9 356.8L962.2 342.7L962.5 326.4L962.9 308.4L963.2 289.2L963.5 269.4L963.9 249.6L964.2 230.4L964.6 212.4L964.9 196.1L965.2 182.0L965.6 170.6L965.9 162.2L966.3 157.0L966.6 155.3L966.9 156.9L967.3 161.5L967.6 169.0L968.0 179.3L968.3 192.1L968.6 206.9L969.0 223.5L969.3 241.3L969.7 259.8L970.0 278.6L970.3 297.2L970.7 315.0L971.0 331.5L971.4 346.4L971.7 359.1L972.0 369.4L972.4 377.0L972.7 381.6L973.0 383.1L973.4 381.6L973.7 377.0L974.1 369.5L974.4 359.2L974.7 346.6L975.1 331.8L975.4 315.3L975.8 297.6L976.1 279.1L976.4 260.4L976.8 241.9L977.1 224.2L977.5 207.8L977.8 193.0L978.1 180.3L978.5 170.1L978.8 162.5L979.2 157.9L979.5 156.4L979.8 158.1L980.2 163.2L980.5 171.6L980.9 182.9L981.2 196.8L981.6 212.9L981.9 230.8L982.3 249.9L982.6 269.5L983.0 289.1L983.3 308.2L983.7 326.0L984.0 342.2L984.4 356.1L984.7 367.4L985.1 375.8L985.4 380.9L985.8 382.6L986.1 380.9L986.4 375.8L986.8 367.4L987.1 356.1L987.5 342.2L987.8 326.1L988.2 308.2L988.5 289.1L988.9 269.5L989.2 249.9L989.6 230.8L989.9 213.0L990.3 196.8L990.6 182.9L991.0 171.6L991.3 163.2L991.7 158.1L992.0 156.4L992.3 157.9L992.7 162.5L993.0 170.0L993.4 180.2L993.7 192.9L994.1 207.6L994.4 224.1L994.7 241.7L995.1 260.2L995.4 278.8L995.8 297.3L996.1 314.9L996.4 331.4L996.8 346.1L997.1 358.8L997.5 369.0L997.8 376.5L998.2 381.1L998.5 382.6L998.8 381.1L999.2 376.5L999.5 369.0L999.9 358.8L1000.2 346.1L1000.6 331.4L1000.9 314.9L1001.2 297.3L1001.6 278.8L1001.9 260.2L1002.3 241.7L1002.6 224.1L1002.9 207.6L1003.3 192.9L1003.6 180.2L1004.0 170.0L1004.3 162.5L1004.7 157.9L1005.0 156.4L1005.3 158.1L1005.7 163.2L1006.0 171.6L1006.4 182.9L1006.7 196.9L1007.1 213.1L1007.4 231.0L1007.8 250.1L1008.1 269.8L1008.5 289.5L1008.8 308.6L1009.2 326.5L1009.5 342.7L1009.9 356.6L1010.2 368.0L1010.6 376.3L1010.9 381.4L1011.2 383.1L1011.6 381.4L1011.9 376.3L1012.3 367.9L1012.6 356.5L1013.0 342.5L1013.3 326.2L1013.7 308.2L1014.0 289.0L1014.4 269.2L1014.7 249.4L1015.1 230.3L1015.4 212.3L1015.8 196.0L1016.1 182.0L1016.5 170.6L1016.8 162.2L1017.2 157.0L1017.5 155.3L1017.8 157.0L1018.2 162.2L1018.5 170.6L1018.9 182.0L1019.2 196.0L1019.5 212.3L1019.9 230.3L1020.2 249.4L1020.6 269.2L1020.9 289.0L1021.3 308.2L1021.6 326.2L1021.9 342.5L1022.3 356.5L1022.6 367.9L1023.0 376.3L1023.3 381.4L1023.7 383.1L1024.0 381.4L1024.3 376.3L1024.7 368.0L1025.0 356.6L1025.4 342.7L1025.7 326.5L1026.0 308.6L1026.4 289.5L1026.7 269.8L1027.1 250.1L1027.4 231.0L1027.8 213.1L1028.1 196.9L1028.4 182.9L1028.8 171.6L1029.1 163.2L1029.5 158.1L1029.8 156.4L1030.1 157.9L1030.5 162.5L1030.8 170.0L1031.1 180.2L1031.5 192.9L1031.8 207.6L1032.1 224.1L1032.5 241.7L1032.8 260.2L1033.1 278.8L1033.5 297.3L1033.8 314.9L1034.1 331.4L1034.5 346.1L1034.8 358.8L1035.1 369.0L1035.5 376.5L1035.8 381.1L1036.2 382.6L1036.5 381.1L1036.8 376.5L1037.2 369.0L1037.5 358.8L1037.8 346.1L1038.2 331.4L1038.5 314.9L1038.8 297.3L1039.2 278.8L1039.5 260.2L1039.8 241.7L1040.2 224.1L1040.5 207.6L1040.8 192.9L1041.2 180.2L1041.5 170.0L1041.8 162.5L1042.2 157.9L1042.5 156.4"/></defs><use href="#bw" stroke="#0c1a60" stroke-width="3" fill="none" opacity="0.7"/><path d="M-5.5 213.5L-5.2 214.1L-4.8 215.9L-4.5 218.8L-4.1 222.8L-3.8 227.8L-3.4 233.7L-3.1 240.4L-2.7 247.6L-2.4 255.3L-2.0 263.2L-1.7 271.2L-1.3 279.2L-1.0 286.8L-0.6 294.1L-0.3 300.7L0.1 306.6L0.4 311.6L0.8 315.6L1.1 318.5L1.5 320.3L1.8 320.9L2.1 320.3L2.5 318.5L2.8 315.6L3.2 311.6L3.5 306.6L3.9 300.7L4.2 294.1L4.6 286.9L4.9 279.2L5.3 271.3L5.6 263.3L6.0 255.4L6.3 247.7L6.7 240.5L7.0 233.8L7.4 228.0L7.7 223.0L8.1 219.0L8.4 216.0L8.8 214.2L9.1 213.7L9.4 214.2L9.8 216.0L10.1 218.9L10.5 222.9L10.8 227.9L11.2 233.8L11.5 240.4L11.9 247.6L12.2 255.2L12.6 263.1L12.9 271.1L13.3 279.0L13.6 286.6L14.0 293.8L14.3 300.4L14.7 306.3L15.0 311.3L15.4 315.3L15.7 318.2L16.1 320.0L16.4 320.6L16.7 320.0L17.1 318.2L17.4 315.3L17.8 311.3L18.1 306.4L18.5 300.5L18.8 294.0L19.2 286.8L19.5 279.2L19.9 271.4L20.2 263.4L20.6 255.6L20.9 248.0L21.3 240.8L21.6 234.3L22.0 228.4L22.3 223.5L22.7 219.5L23.0 216.6L23.4 214.8L23.7 214.2L24.0 214.8L24.4 216.4L24.7 219.0L25.1 222.6L25.4 227.1L25.8 232.5L26.1 238.5L26.4 245.1L26.8 252.2L27.1 259.5L27.5 267.0L27.8 274.5L28.2 281.9L28.5 288.9L28.8 295.6L29.2 301.6L29.5 306.9L29.9 311.4L30.2 315.0L30.6 317.7L30.9 319.3L31.2 319.8L31.6 319.3L31.9 317.7L32.3 315.1L32.6 311.5L33.0 307.0L33.3 301.7L33.7 295.8L34.0 289.2L34.3 282.2L34.7 274.9L35.0 267.5L35.4 260.0L35.7 252.7L36.1 245.7L36.4 239.2L36.7 233.2L37.1 227.9L37.4 223.5L37.8 219.9L38.1 217.3L38.5 215.7L38.8 215.1L39.1 215.7L39.5 217.3L39.8 219.9L40.2 223.4L40.5 227.9L40.8 233.1L41.2 239.1L41.5 245.6L41.9 252.6L42.2 259.8L42.6 267.2L42.9 274.7L43.2 281.9L43.6 288.9L43.9 295.4L44.3 301.4L44.6 306.6L44.9 311.1L45.3 314.6L45.6 317.2L46.0 318.8L46.3 319.4L46.6 318.8L47.0 317.2L47.3 314.6L47.7 311.1L48.0 306.6L48.3 301.4L48.7 295.4L49.0 288.9L49.4 281.9L49.7 274.7L50.1 267.2L50.4 259.8L50.7 252.6L51.1 245.6L51.4 239.1L51.8 233.1L52.1 227.9L52.4 223.4L52.8 219.9L53.1 217.3L53.5 215.7L53.8 215.2L54.1 215.7L54.5 217.3L54.8 219.9L55.2 223.5L55.5 227.9L55.8 233.2L56.2 239.2L56.5 245.7L56.8 252.7L57.2 260.0L57.5 267.5L57.9 274.9L58.2 282.2L58.5 289.2L58.9 295.8L59.2 301.7L59.6 307.0L59.9 311.5L60.2 315.1L60.6 317.7L60.9 319.3L61.2 319.8L61.6 319.3L61.9 317.7L62.3 315.0L62.6 311.4L62.9 306.9L63.3 301.6L63.6 295.6L64.0 288.9L64.3 281.9L64.6 274.5L65.0 267.0L65.3 259.5L65.7 252.2L66.0 245.1L66.3 238.5L66.7 232.5L67.0 227.1L67.3 222.6L67.7 219.0L68.0 216.4L68.4 214.8L68.7 214.2L69.0 214.8L69.4 216.6L69.7 219.5L70.1 223.5L70.4 228.5L70.7 234.3L71.1 240.9L71.4 248.1L71.7 255.7L72.1 263.6L72.4 271.5L72.8 279.4L73.1 287.0L73.4 294.2L73.8 300.8L74.1 306.6L74.4 311.6L74.8 315.5L75.1 318.5L75.5 320.2L75.8 320.8L76.1 320.2L76.5 318.4L76.8 315.5L77.2 311.5L77.5 306.4L77.8 300.5L78.2 293.9L78.5 286.6L78.8 278.9L79.2 271.0L79.5 262.9L79.9 255.0L80.2 247.3L80.5 240.0L80.9 233.4L81.2 227.5L81.5 222.5L81.9 218.4L82.2 215.5L82.6 213.7L82.9 213.1L83.2 213.8L83.6 215.8L83.9 219.0L84.3 223.5L84.6 229.0L85.0 235.5L85.3 242.7L85.7 250.6L86.0 258.9L86.4 267.4L86.7 275.9L87.1 284.2L87.4 292.1L87.8 299.3L88.1 305.8L88.5 311.3L88.8 315.8L89.2 319.0L89.5 321.0L89.9 321.7L90.2 321.0L90.5 319.0L90.9 315.7L91.2 311.3L91.6 305.7L91.9 299.2L92.3 291.9L92.6 284.0L93.0 275.6L93.3 267.1L93.7 258.6L94.0 250.2L94.4 242.3L94.7 235.0L95.1 228.5L95.4 222.9L95.8 218.5L96.1 215.2L96.5 213.2L96.8 212.5L97.1 213.2L97.5 215.2L97.8 218.5L98.2 223.0L98.5 228.6L98.8 235.2L99.2 242.5L99.5 250.5L99.9 258.9L100.2 267.5L100.5 276.1L100.9 284.5L101.2 292.4L101.6 299.8L101.9 306.3L102.2 312.0L102.6 316.5L102.9 319.8L103.3 321.8L103.6 322.4L103.9 321.8L104.3 319.7L104.6 316.4L105.0 311.9L105.3 306.2L105.6 299.6L106.0 292.2L106.3 284.2L106.7 275.7L107.0 267.0L107.3 258.4L107.7 249.9L108.0 241.9L108.4 234.4L108.7 227.8L109.0 222.2L109.4 217.6L109.7 214.3L110.1 212.3L110.4 211.6L110.7 215.2L111.1 220.8L111.4 227.6L111.8 235.0L112.1 242.9L112.4 251.0L112.8 259.1L113.1 267.3L113.5 275.2L113.8 283.0L114.1 290.4L114.5 297.5L114.8 304.2L115.2 310.4L115.5 316.1L115.8 321.3L116.2 326.0L116.5 330.1L116.9 333.7L117.2 336.7L117.5 339.1L117.9 341.0L118.2 342.3L118.6 343.1L118.9 343.4L119.2 342.4L119.6 340.5L119.9 338.0L120.2 334.9L120.6 331.6L120.9 326.4L121.2 321.0L121.6 317.3L121.9 314.3L122.2 311.5L122.6 308.1L122.9 303.5L123.2 298.0L123.6 293.1L123.9 289.9L124.2 287.4L124.6 285.3L124.9 283.4L125.2 281.6L125.6 279.8L125.9 278.1L126.2 276.6L126.6 275.2L126.9 273.9L127.2 272.9L127.6 272.1L127.9 271.3L128.2 270.6L128.6 270.0L128.9 269.4L129.2 268.9L129.6 268.4L129.9 268.0L130.2 267.7L130.6 267.4L130.9 267.1L131.2 266.9L131.6 266.8L131.9 266.6L132.2 266.5L132.6 266.3L132.9 266.2L133.2 266.1L133.6 265.9L133.9 265.8L134.2 265.6L134.6 265.4L134.9 265.2L135.2 265.1L135.6 264.9L135.9 264.7L136.2 264.5L136.6 264.3L136.9 264.1L137.2 263.9L137.6 263.6L137.9 263.4L138.2 263.1L138.6 262.8L138.9 262.5L139.2 262.1L139.6 261.7L139.9 261.3L140.2 260.6L140.6 259.8L140.9 258.9L141.2 257.9L141.6 256.8L141.9 255.5L142.2 254.0L142.6 252.3L142.9 250.4L143.2 248.5L143.6 246.4L143.9 243.9L144.2 240.8L144.6 235.7L144.9 228.1L145.2 221.5L145.6 216.6L145.9 212.1L146.2 208.2L146.6 204.9L146.9 201.7L147.2 198.7L147.6 195.9L147.9 193.4L148.2 191.1L148.6 189.2L148.9 187.6L149.2 187.7L149.6 188.1L149.9 189.1L150.2 190.8L150.6 193.2L150.9 196.6L151.3 200.8L151.6 206.1L151.9 212.3L152.3 219.4L152.6 227.4L152.9 236.1L153.3 245.4L153.6 255.1L154.0 265.1L154.3 275.1L154.6 284.8L155.0 294.0L155.3 302.4L155.6 309.8L156.0 315.9L156.3 320.4L156.7 323.3L157.0 324.2L157.3 323.3L157.7 320.4L158.0 315.7L158.4 309.3L158.7 301.5L159.0 292.5L159.4 282.6L159.7 272.3L160.1 261.7L160.4 251.3L160.8 241.4L161.1 232.5L161.4 224.6L161.8 218.3L162.1 213.6L162.5 210.7L162.8 209.7L163.1 210.5L163.5 212.8L163.8 216.6L164.1 221.8L164.5 228.2L164.8 235.7L165.1 244.1L165.5 253.0L165.8 262.4L166.1 271.9L166.5 281.3L166.8 290.2L167.1 298.6L167.5 306.1L167.8 312.5L168.1 317.7L168.5 321.5L168.8 323.8L169.1 324.6L169.5 323.8L169.8 321.5L170.2 317.7L170.5 312.5L170.8 306.1L171.2 298.7L171.5 290.3L171.8 281.4L172.2 272.1L172.5 262.6L172.8 253.3L173.2 244.4L173.5 236.0L173.8 228.6L174.2 222.2L174.5 217.0L174.8 213.2L175.2 210.9L175.5 210.1L175.8 210.9L176.2 213.2L176.5 217.0L176.8 222.2L177.2 228.5L177.5 236.0L177.9 244.3L178.2 253.2L178.5 262.5L178.9 272.0L179.2 281.3L179.5 290.2L179.9 298.5L180.2 306.0L180.6 312.3L180.9 317.5L181.2 321.3L181.6 323.6L181.9 324.4L182.2 323.6L182.6 321.3L182.9 317.5L183.2 312.3L183.6 306.0L183.9 298.5L184.3 290.2L184.6 281.3L184.9 272.0L185.3 262.5L185.6 253.2L185.9 244.3L186.3 236.0L186.6 228.5L187.0 222.2L187.3 217.0L187.6 213.2L188.0 210.9L188.3 210.1L188.7 211.0L189.0 213.5L189.4 217.8L189.7 223.5L190.1 230.5L190.4 238.7L190.8 247.7L191.1 257.3L191.5 267.2L191.8 277.2L192.2 286.8L192.5 295.8L192.9 304.0L193.2 311.0L193.6 316.7L193.9 321.0L194.2 323.5L194.6 324.4L195.0 323.5L195.3 321.0L195.7 316.7L196.0 311.0L196.4 304.0L196.7 295.8L197.1 286.8L197.4 277.2L197.8 267.2L198.1 257.3L198.4 247.7L198.8 238.7L199.1 230.5L199.5 223.5L199.8 217.8L200.2 213.5L200.5 211.0L200.9 210.1L201.2 210.9L201.6 213.2L201.9 217.0L202.3 222.2L202.6 228.5L203.0 236.0L203.3 244.3L203.6 253.2L204.0 262.5L204.3 272.0L204.7 281.3L205.0 290.2L205.3 298.5L205.7 306.0L206.0 312.3L206.4 317.5L206.7 321.3L207.1 323.6L207.4 324.4L207.7 323.6L208.1 321.3L208.4 317.5L208.8 312.3L209.1 306.0L209.5 298.5L209.8 290.2L210.1 281.3L210.5 272.0L210.8 262.5L211.2 253.2L211.5 244.3L211.8 236.0L212.2 228.5L212.5 222.2L212.9 217.0L213.2 213.2L213.6 210.9L213.9 210.1L214.2 210.9L214.6 213.2L214.9 217.0L215.3 222.2L215.6 228.5L215.9 236.0L216.3 244.3L216.6 253.2L217.0 262.5L217.3 272.0L217.6 281.3L218.0 290.2L218.3 298.5L218.7 306.0L219.0 312.3L219.3 317.5L219.7 321.3L220.0 323.6L220.3 324.4L220.7 323.6L221.0 321.3L221.4 317.5L221.7 312.3L222.0 306.0L222.4 298.5L222.7 290.2L223.1 281.3L223.4 272.0L223.7 262.5L224.1 253.2L224.4 244.3L224.8 236.0L225.1 228.5L225.4 222.2L225.8 217.0L226.1 213.2L226.5 210.9L226.8 210.1L227.1 211.0L227.5 213.6L227.8 217.8L228.2 223.5L228.5 230.6L228.9 238.7L229.2 247.8L229.6 257.4L229.9 267.4L230.2 277.3L230.6 286.9L230.9 296.0L231.3 304.1L231.6 311.2L232.0 316.9L232.3 321.1L232.7 323.7L233.0 324.6L233.3 323.7L233.7 321.1L234.0 316.9L234.4 311.2L234.7 304.1L235.1 295.9L235.4 286.8L235.8 277.1L236.1 267.1L236.4 257.2L236.8 247.5L237.1 238.4L237.5 230.2L237.8 223.1L238.2 217.4L238.5 213.2L238.9 210.6L239.2 209.7L239.5 210.5L239.9 212.8L240.2 216.6L240.5 221.8L240.9 228.3L241.2 235.8L241.6 244.1L241.9 253.1L242.2 262.5L242.6 272.0L242.9 281.4L243.2 290.4L243.6 298.7L243.9 306.2L244.3 312.7L244.6 317.9L244.9 321.7L245.3 324.0L245.6 324.8L245.9 324.0L246.3 321.7L246.6 317.9L246.9 312.7L247.3 306.2L247.6 298.7L248.0 290.4L248.3 281.4L248.6 272.0L249.0 262.5L249.3 253.1L249.6 244.1L250.0 235.8L250.3 228.3L250.7 221.8L251.0 216.6L251.3 212.8L251.7 210.5L252.0 209.7L252.3 210.5L252.7 212.8L253.0 216.7L253.4 221.9L253.7 228.3L254.0 235.9L254.4 244.2L254.7 253.3L255.1 262.7L255.4 272.2L255.7 281.6L256.1 290.6L256.4 299.0L256.8 306.5L257.1 313.0L257.4 318.2L257.8 322.0L258.1 324.4L258.5 325.1L258.8 324.4L259.1 322.0L259.5 318.2L259.8 312.9L260.1 306.4L260.5 298.8L260.8 290.4L261.2 281.3L261.5 271.9L261.8 262.3L262.2 252.8L262.5 243.7L262.9 235.3L263.2 227.7L263.5 221.2L263.9 216.0L264.2 212.1L264.6 209.8L264.9 209.0L265.2 209.8L265.6 212.2L265.9 216.0L266.2 221.3L266.6 227.8L266.9 235.4L267.3 243.9L267.6 253.0L267.9 262.5L268.3 272.2L268.6 281.7L268.9 290.8L269.3 299.3L269.6 306.9L270.0 313.4L270.3 318.7L270.6 322.5L271.0 324.9L271.3 325.7L271.6 324.9L272.0 322.5L272.3 318.6L272.6 313.4L273.0 306.8L273.3 299.2L273.7 290.7L274.0 281.5L274.3 272.0L274.7 262.3L275.0 252.8L275.3 243.6L275.7 235.1L276.0 227.5L276.4 220.9L276.7 215.7L277.0 211.8L277.4 209.4L277.7 208.6L278.0 209.4L278.4 211.8L278.7 215.7L279.1 221.0L279.4 227.5L279.8 235.2L280.1 243.7L280.5 252.9L280.8 262.4L281.1 272.1L281.5 281.6L281.8 290.8L282.2 299.3L282.5 307.0L282.9 313.5L283.2 318.8L283.6 322.7L283.9 325.1L284.2 325.9L284.6 325.1L284.9 322.7L285.3 318.8L285.6 313.5L286.0 307.0L286.3 299.3L286.7 290.8L287.0 281.6L287.4 272.1L287.7 262.4L288.0 252.9L288.4 243.7L288.7 235.2L289.1 227.5L289.4 221.0L289.8 215.7L290.1 211.8L290.5 209.4L290.8 208.6L291.1 209.4L291.5 211.8L291.8 215.7L292.2 220.9L292.5 227.5L292.8 235.1L293.2 243.6L293.5 252.8L293.9 262.3L294.2 272.0L294.5 281.5L294.9 290.7L295.2 299.2L295.6 306.8L295.9 313.4L296.2 318.6L296.6 322.5L296.9 324.9L297.2 325.7L297.6 324.9L297.9 322.5L298.3 318.7L298.6 313.4L298.9 306.9L299.3 299.3L299.6 290.8L300.0 281.7L300.3 272.2L300.6 262.5L301.0 253.0L301.3 243.9L301.7 235.4L302.0 227.8L302.3 221.3L302.7 216.0L303.0 212.2L303.4 209.8L303.7 209.0L304.0 209.8L304.4 212.2L304.7 216.0L305.1 221.3L305.4 227.8L305.8 235.4L306.1 243.9L306.5 253.0L306.8 262.4L307.1 272.1L307.5 281.5L307.8 290.6L308.2 299.1L308.5 306.7L308.9 313.2L309.2 318.5L309.6 322.3L309.9 324.7L310.2 325.5L310.6 324.7L310.9 322.3L311.3 318.5L311.6 313.2L312.0 306.7L312.3 299.1L312.7 290.6L313.0 281.5L313.4 272.1L313.7 262.4L314.0 253.0L314.4 243.9L314.7 235.4L315.1 227.8L315.4 221.3L315.8 216.0L316.1 212.2L316.5 209.8L316.8 209.0L317.1 209.8L317.5 212.2L317.8 216.0L318.2 221.3L318.5 227.8L318.8 235.4L319.2 243.9L319.5 253.0L319.9 262.4L320.2 272.1L320.5 281.5L320.9 290.6L321.2 299.1L321.6 306.7L321.9 313.2L322.2 318.5L322.6 322.3L322.9 324.7L323.2 325.5L323.6 324.7L323.9 322.3L324.3 318.5L324.6 313.2L324.9 306.7L325.3 299.1L325.6 290.6L326.0 281.5L326.3 272.1L326.6 262.4L327.0 253.0L327.3 243.9L327.7 235.4L328.0 227.8L328.3 221.3L328.7 216.0L329.0 212.2L329.4 209.8L329.7 209.0L330.0 209.8L330.4 212.2L330.7 216.0L331.1 221.3L331.4 227.8L331.8 235.4L332.1 243.9L332.5 253.0L332.8 262.4L333.1 272.1L333.5 281.5L333.8 290.6L334.2 299.1L334.5 306.7L334.9 313.2L335.2 318.5L335.6 322.3L335.9 324.7L336.2 325.5L336.6 324.7L336.9 322.3L337.3 318.5L337.6 313.2L338.0 306.7L338.3 299.1L338.7 290.6L339.0 281.5L339.4 272.1L339.7 262.4L340.0 253.0L340.4 243.9L340.7 235.4L341.1 227.8L341.4 221.3L341.8 216.0L342.1 212.2L342.5 209.8L342.8 209.0L343.1 209.8L343.5 212.1L343.8 216.0L344.2 221.2L344.5 227.7L344.8 235.3L345.2 243.7L345.5 252.8L345.9 262.3L346.2 271.8L346.5 281.3L346.9 290.4L347.2 298.8L347.6 306.4L347.9 312.9L348.2 318.1L348.6 322.0L348.9 324.3L349.2 325.1L349.6 324.3L349.9 322.0L350.3 318.2L350.6 312.9L350.9 306.5L351.3 299.0L351.6 290.6L352.0 281.6L352.3 272.2L352.6 262.7L353.0 253.3L353.3 244.3L353.7 235.9L354.0 228.4L354.3 222.0L354.7 216.7L355.0 212.9L355.4 210.6L355.7 209.8L356.0 210.5L356.4 212.6L356.7 216.0L357.1 220.7L357.4 226.6L357.8 233.4L358.1 241.1L358.5 249.4L358.8 258.1L359.2 267.1L359.5 276.0L359.8 284.8L360.2 293.1L360.5 300.7L360.9 307.6L361.2 313.4L361.6 318.1L361.9 321.5L362.3 323.6L362.6 324.4L362.9 323.6L363.3 321.6L363.6 318.1L364.0 313.5L364.3 307.7L364.7 300.9L365.0 293.3L365.4 285.0L365.7 276.3L366.0 267.4L366.4 258.5L366.7 249.8L367.1 241.6L367.4 234.0L367.8 227.2L368.1 221.4L368.5 216.7L368.8 213.3L369.2 211.2L369.5 210.5L369.8 211.2L370.2 213.3L370.5 216.7L370.9 221.3L371.2 227.1L371.5 233.9L371.9 241.4L372.2 249.6L372.6 258.3L372.9 267.1L373.2 276.0L373.6 284.7L373.9 292.9L374.3 300.4L374.6 307.2L374.9 313.0L375.3 317.6L375.6 321.0L376.0 323.1L376.3 323.8L376.6 323.1L377.0 321.0L377.3 317.6L377.7 313.0L378.0 307.3L378.3 300.5L378.7 293.0L379.0 284.8L379.4 276.2L379.7 267.4L380.0 258.5L380.4 249.9L380.7 241.7L381.1 234.2L381.4 227.4L381.7 221.7L382.1 217.1L382.4 213.7L382.8 211.6L383.1 210.9L383.4 211.6L383.8 213.6L384.1 217.0L384.5 221.6L384.8 227.3L385.1 234.0L385.5 241.5L385.8 249.6L386.2 258.1L386.5 266.9L386.8 275.6L387.2 284.2L387.5 292.3L387.9 299.8L388.2 306.5L388.5 312.2L388.9 316.8L389.2 320.1L389.6 322.2L389.9 322.9L390.2 322.2L390.6 320.2L390.9 316.9L391.3 312.3L391.6 306.7L391.9 300.1L392.3 292.7L392.6 284.7L393.0 276.3L393.3 267.6L393.6 259.0L394.0 250.5L394.3 242.5L394.7 235.1L395.0 228.5L395.3 222.9L395.7 218.4L396.0 215.1L396.4 213.0L396.7 212.3L397.0 212.9L397.4 214.6L397.7 217.3L398.0 221.0L398.4 225.7L398.7 231.2L399.0 237.4L399.4 244.3L399.7 251.6L400.0 259.2L400.4 267.0L400.7 274.7L401.0 282.3L401.4 289.6L401.7 296.5L402.0 302.7L402.4 308.2L402.7 312.9L403.0 316.6L403.4 319.4L403.7 321.0L404.0 321.6L404.4 321.0L404.7 319.4L405.1 316.7L405.4 313.0L405.7 308.4L406.1 302.9L406.4 296.8L406.7 290.0L407.1 282.8L407.4 275.2L407.7 267.5L408.1 259.8L408.4 252.3L408.7 245.1L409.1 238.3L409.4 232.2L409.7 226.7L410.1 222.1L410.4 218.4L410.7 215.7L411.1 214.1L411.4 213.5L411.7 214.1L412.1 215.9L412.4 218.8L412.8 222.8L413.1 227.8L413.5 233.6L413.8 240.2L414.2 247.4L414.5 255.0L414.9 262.9L415.2 270.9L415.6 278.8L415.9 286.4L416.3 293.6L416.6 300.2L417.0 306.0L417.3 311.0L417.7 315.0L418.0 317.9L418.4 319.7L418.7 320.3L419.0 319.7L419.4 318.0L419.7 315.1L420.1 311.1L420.4 306.2L420.8 300.5L421.1 294.0L421.5 286.9L421.8 279.3L422.2 271.5L422.5 263.7L422.9 255.9L423.2 248.3L423.6 241.2L423.9 234.7L424.3 229.0L424.6 224.1L425.0 220.1L425.3 217.2L425.7 215.5L426.0 214.9L426.3 215.4L426.7 217.0L427.0 219.6L427.4 223.2L427.7 227.6L428.0 232.9L428.4 238.9L428.7 245.4L429.1 252.4L429.4 259.6L429.8 267.1L430.1 274.5L430.4 281.8L430.8 288.7L431.1 295.3L431.5 301.2L431.8 306.5L432.1 310.9L432.5 314.5L432.8 317.1L433.2 318.7L433.5 319.2L433.8 318.7L434.2 317.1L434.5 314.5L434.9 311.0L435.2 306.6L435.5 301.4L435.9 295.4L436.2 289.0L436.6 282.0L436.9 274.8L437.2 267.4L437.6 260.1L437.9 252.8L438.3 245.9L438.6 239.4L439.0 233.5L439.3 228.3L439.6 223.9L440.0 220.3L440.3 217.7L440.7 216.2L441.0 215.6L441.3 216.2L441.7 217.7L442.0 220.3L442.4 223.9L442.7 228.3L443.1 233.5L443.4 239.4L443.8 245.9L444.1 252.8L444.5 260.1L444.8 267.4L445.2 274.8L445.5 282.0L445.9 289.0L446.2 295.4L446.6 301.4L446.9 306.6L447.3 311.0L447.6 314.5L448.0 317.1L448.3 318.7L448.6 319.2L449.0 318.7L449.3 317.1L449.7 314.5L450.0 310.9L450.4 306.5L450.7 301.2L451.1 295.3L451.4 288.7L451.8 281.8L452.1 274.5L452.5 267.1L452.8 259.6L453.2 252.4L453.5 245.4L453.9 238.9L454.2 232.9L454.6 227.6L454.9 223.2L455.3 219.6L455.6 217.0L456.0 215.4L456.3 214.9L456.6 215.4L457.0 217.0L457.3 219.7L457.6 223.3L458.0 227.8L458.3 233.1L458.6 239.1L459.0 245.7L459.3 252.7L459.6 260.0L460.0 267.5L460.3 275.0L460.6 282.4L461.0 289.4L461.3 296.0L461.6 302.0L462.0 307.3L462.3 311.8L462.6 315.4L463.0 318.0L463.3 319.6L463.6 320.1L464.0 319.6L464.3 318.0L464.7 315.3L465.0 311.7L465.3 307.2L465.7 301.8L466.0 295.7L466.3 289.1L466.7 282.0L467.0 274.5L467.3 267.0L467.7 259.4L468.0 252.0L468.3 244.9L468.7 238.2L469.0 232.2L469.3 226.8L469.7 222.2L470.0 218.6L470.3 216.0L470.7 214.3L471.0 213.8L471.3 214.4L471.7 216.2L472.0 219.1L472.4 223.1L472.7 228.1L473.1 234.0L473.4 240.7L473.8 247.9L474.1 255.6L474.5 263.5L474.8 271.5L475.2 279.5L475.5 287.2L475.9 294.4L476.2 301.0L476.6 306.9L476.9 311.9L477.3 315.9L477.6 318.9L478.0 320.6L478.3 321.2L478.6 320.6L479.0 318.8L479.3 315.9L479.7 311.8L480.0 306.8L480.4 300.8L480.7 294.1L481.1 286.8L481.4 279.1L481.8 271.0L482.1 262.9L482.5 254.9L482.8 247.1L483.2 239.8L483.5 233.1L483.9 227.2L484.2 222.1L484.6 218.1L484.9 215.1L485.3 213.3L485.6 212.7L485.9 213.4L486.3 215.4L486.6 218.7L487.0 223.2L487.3 228.8L487.7 235.4L488.0 242.7L488.4 250.7L488.7 259.1L489.1 267.7L489.4 276.3L489.8 284.7L490.1 292.7L490.5 300.0L490.8 306.6L491.2 312.2L491.5 316.7L491.9 320.0L492.2 322.0L492.5 322.7L492.9 322.0L493.2 320.0L493.6 316.6L493.9 312.0L494.3 306.3L494.6 299.7L495.0 292.2L495.3 284.1L495.7 275.5L496.0 266.8L496.4 258.1L496.7 249.5L497.1 241.4L497.4 233.9L497.8 227.3L498.1 221.6L498.5 217.0L498.8 213.6L499.2 211.6L499.5 210.9L499.8 211.7L500.2 214.0L500.5 217.7L500.9 222.8L501.2 229.2L501.6 236.6L501.9 244.8L502.3 253.6L502.6 262.8L503.0 272.2L503.3 281.4L503.7 290.3L504.0 298.5L504.4 305.9L504.7 312.2L505.1 317.3L505.4 321.1L505.8 323.4L506.1 324.1L506.4 323.4L506.8 321.1L507.1 317.3L507.5 312.1L507.8 305.7L508.2 298.2L508.5 289.9L508.9 281.0L509.2 271.7L509.6 262.3L509.9 252.9L510.3 244.0L510.6 235.7L511.0 228.3L511.3 221.9L511.7 216.7L512.0 212.9L512.4 210.6L512.7 209.8L513.0 210.6L513.4 212.9L513.7 216.7L514.1 222.0L514.4 228.4L514.8 235.9L515.1 244.3L515.5 253.3L515.8 262.7L516.1 272.2L516.5 281.6L516.8 290.6L517.2 299.0L517.5 306.5L517.9 312.9L518.2 318.2L518.6 322.0L518.9 324.3L519.2 325.1L519.6 324.3L519.9 322.0L520.3 318.1L520.6 312.9L521.0 306.4L521.3 298.8L521.7 290.4L522.0 281.3L522.4 271.8L522.7 262.3L523.0 252.8L523.4 243.7L523.7 235.3L524.1 227.7L524.4 221.2L524.8 216.0L525.1 212.1L525.5 209.8L525.8 209.0L526.1 209.8L526.5 212.2L526.8 216.0L527.2 221.3L527.5 227.8L527.9 235.4L528.2 243.9L528.6 253.0L528.9 262.5L529.3 272.1L529.6 281.6L530.0 290.8L530.3 299.2L530.7 306.8L531.0 313.4L531.4 318.6L531.7 322.5L532.1 324.9L532.4 325.6L532.7 324.9L533.1 322.5L533.4 318.6L533.8 313.3L534.1 306.8L534.5 299.2L534.8 290.7L535.2 281.5L535.5 272.0L535.9 262.3L536.2 252.8L536.6 243.7L536.9 235.2L537.3 227.6L537.6 221.0L538.0 215.7L538.3 211.9L538.7 209.5L539.0 208.7L539.3 209.5L539.7 211.9L540.0 215.8L540.3 221.1L540.7 227.7L541.0 235.3L541.4 243.8L541.7 253.0L542.0 262.6L542.4 272.3L542.7 281.9L543.0 291.0L543.4 299.6L543.7 307.2L544.1 313.8L544.4 319.1L544.7 323.0L545.1 325.4L545.4 326.2L545.7 325.4L546.1 323.0L546.4 319.1L546.7 313.7L547.1 307.1L547.4 299.4L547.8 290.8L548.1 281.6L548.4 271.9L548.8 262.2L549.1 252.6L549.4 243.3L549.8 234.7L550.1 227.0L550.5 220.4L550.8 215.1L551.1 211.2L551.5 208.8L551.8 207.9L552.1 208.8L552.5 211.2L552.8 215.1L553.2 220.5L553.5 227.1L553.9 234.9L554.2 243.5L554.6 252.8L554.9 262.4L555.3 272.2L555.6 281.9L556.0 291.2L556.3 299.8L556.7 307.6L557.0 314.2L557.4 319.6L557.7 323.5L558.1 325.9L558.4 326.7L558.7 325.9L559.1 323.5L559.4 319.5L559.8 314.2L560.1 307.5L560.5 299.7L560.8 291.1L561.2 281.8L561.5 272.1L561.9 262.2L562.2 252.5L562.6 243.2L562.9 234.6L563.3 226.8L563.6 220.2L564.0 214.8L564.3 210.8L564.7 208.4L565.0 207.6L565.3 208.4L565.7 210.8L566.0 214.8L566.3 220.2L566.7 226.9L567.0 234.7L567.4 243.3L567.7 252.7L568.0 262.4L568.4 272.3L568.7 282.0L569.0 291.4L569.4 300.0L569.7 307.8L570.1 314.5L570.4 319.9L570.7 323.9L571.1 326.3L571.4 327.1L571.7 326.3L572.1 323.9L572.4 319.9L572.7 314.5L573.1 307.8L573.4 299.9L573.8 291.2L574.1 281.9L574.4 272.1L574.8 262.2L575.1 252.4L575.4 243.1L575.8 234.4L576.1 226.5L576.5 219.8L576.8 214.4L577.1 210.4L577.5 208.0L577.8 207.2L578.1 208.0L578.5 210.5L578.8 214.4L579.1 219.9L579.5 226.6L579.8 234.4L580.2 243.1L580.5 252.5L580.8 262.3L581.2 272.2L581.5 282.0L581.8 291.4L582.2 300.1L582.5 307.9L582.9 314.6L583.2 320.1L583.5 324.0L583.9 326.5L584.2 327.3L584.5 326.5L584.9 324.0L585.2 320.1L585.5 314.6L585.9 307.9L586.2 300.1L586.6 291.4L586.9 282.0L587.2 272.2L587.6 262.3L587.9 252.5L588.2 243.1L588.6 234.4L588.9 226.6L589.3 219.9L589.6 214.4L589.9 210.5L590.3 208.0L590.6 207.2L590.9 208.0L591.3 210.5L591.6 214.4L591.9 219.9L592.3 226.6L592.6 234.4L593.0 243.1L593.3 252.5L593.6 262.3L594.0 272.2L594.3 282.0L594.6 291.4L595.0 300.1L595.3 307.9L595.7 314.6L596.0 320.1L596.3 324.0L596.7 326.5L597.0 327.3L597.3 326.5L597.7 324.0L598.0 320.1L598.3 314.6L598.7 307.9L599.0 300.1L599.4 291.4L599.7 282.0L600.0 272.2L600.4 262.3L600.7 252.5L601.0 243.1L601.4 234.4L601.7 226.6L602.1 219.9L602.4 214.4L602.7 210.5L603.1 208.0L603.4 207.2L603.7 208.0L604.1 210.5L604.4 214.4L604.7 219.9L605.1 226.6L605.4 234.4L605.7 243.1L606.1 252.5L606.4 262.3L606.7 272.2L607.1 282.0L607.4 291.4L607.7 300.1L608.1 307.9L608.4 314.6L608.7 320.1L609.1 324.0L609.4 326.5L609.8 327.3L610.1 326.5L610.4 324.0L610.8 320.1L611.1 314.6L611.4 307.9L611.8 300.1L612.1 291.4L612.4 282.0L612.8 272.2L613.1 262.3L613.4 252.5L613.8 243.1L614.1 234.4L614.4 226.6L614.8 219.9L615.1 214.4L615.4 210.5L615.8 208.0L616.1 207.2L616.4 208.0L616.8 210.5L617.1 214.4L617.5 219.9L617.8 226.6L618.1 234.4L618.5 243.1L618.8 252.5L619.2 262.3L619.5 272.2L619.8 282.0L620.2 291.4L620.5 300.1L620.9 307.9L621.2 314.6L621.5 320.1L621.9 324.0L622.2 326.5L622.5 327.3L622.9 326.5L623.2 324.0L623.6 320.1L623.9 314.6L624.2 307.9L624.6 300.1L624.9 291.4L625.3 282.0L625.6 272.2L625.9 262.3L626.3 252.5L626.6 243.1L627.0 234.4L627.3 226.6L627.6 219.9L628.0 214.4L628.3 210.5L628.7 208.0L629.0 207.2L629.3 208.0L629.7 210.4L630.0 214.4L630.3 219.8L630.7 226.5L631.0 234.4L631.3 243.1L631.7 252.4L632.0 262.2L632.3 272.1L632.7 281.9L633.0 291.2L633.3 299.9L633.7 307.8L634.0 314.5L634.3 319.9L634.7 323.9L635.0 326.3L635.4 327.1L635.7 326.3L636.0 323.9L636.4 319.9L636.7 314.5L637.0 307.8L637.4 300.0L637.7 291.4L638.0 282.0L638.4 272.3L638.7 262.4L639.0 252.7L639.4 243.3L639.7 234.7L640.0 226.9L640.4 220.2L640.7 214.8L641.0 210.8L641.4 208.4L641.7 207.6L642.1 208.5L642.4 211.2L642.8 215.6L643.1 221.5L643.5 228.8L643.8 237.3L644.1 246.7L644.5 256.7L644.9 267.1L645.2 277.4L645.6 287.4L645.9 296.8L646.2 305.3L646.6 312.6L647.0 318.6L647.3 323.0L647.6 325.6L648.0 326.6L648.4 325.7L648.7 323.0L649.0 318.6L649.4 312.7L649.8 305.4L650.1 297.0L650.4 287.6L650.8 277.7L651.1 267.4L651.5 257.2L651.9 247.2L652.2 237.9L652.5 229.4L652.9 222.1L653.2 216.2L653.6 211.9L653.9 209.2L654.3 208.3L654.6 209.1L655.0 211.5L655.3 215.4L655.6 220.8L656.0 227.4L656.3 235.1L656.6 243.7L657.0 252.9L657.3 262.5L657.6 272.3L658.0 281.9L658.3 291.2L658.6 299.8L659.0 307.5L659.3 314.1L659.6 319.4L660.0 323.3L660.3 325.7L660.6 326.6L661.0 325.7L661.3 323.3L661.7 319.4L662.0 314.0L662.3 307.4L662.7 299.6L663.0 291.0L663.3 281.7L663.7 272.0L664.0 262.2L664.3 252.5L664.7 243.2L665.0 234.5L665.3 226.8L665.7 220.1L666.0 214.8L666.3 210.8L666.7 208.4L667.0 207.6L667.3 208.4L667.7 210.8L668.0 214.8L668.4 220.2L668.7 226.9L669.0 234.6L669.4 243.3L669.7 252.6L670.1 262.3L670.4 272.2L670.7 281.9L671.1 291.2L671.4 299.9L671.8 307.6L672.1 314.3L672.4 319.7L672.8 323.7L673.1 326.1L673.5 326.9L673.8 326.1L674.1 323.7L674.5 319.7L674.8 314.3L675.1 307.6L675.5 299.9L675.8 291.2L676.2 281.9L676.5 272.2L676.8 262.3L677.2 252.6L677.5 243.3L677.9 234.6L678.2 226.9L678.5 220.2L678.9 214.8L679.2 210.8L679.6 208.4L679.9 207.6L680.2 208.4L680.6 210.8L680.9 214.8L681.2 220.2L681.6 226.9L681.9 234.6L682.3 243.3L682.6 252.6L682.9 262.3L683.3 272.2L683.6 281.9L683.9 291.2L684.3 299.9L684.6 307.6L685.0 314.3L685.3 319.7L685.6 323.7L686.0 326.1L686.3 326.9L686.6 326.1L687.0 323.7L687.3 319.7L687.6 314.3L688.0 307.6L688.3 299.9L688.7 291.2L689.0 281.9L689.3 272.2L689.7 262.3L690.0 252.6L690.3 243.3L690.7 234.6L691.0 226.9L691.4 220.2L691.7 214.8L692.0 210.8L692.4 208.4L692.7 207.6L693.0 208.4L693.4 210.8L693.7 214.8L694.1 220.2L694.4 226.8L694.8 234.6L695.1 243.2L695.5 252.5L695.8 262.2L696.1 272.1L696.5 281.8L696.8 291.1L697.2 299.7L697.5 307.5L697.9 314.1L698.2 319.5L698.6 323.5L698.9 325.9L699.2 326.7L699.6 325.9L699.9 323.5L700.3 319.5L700.6 314.2L701.0 307.5L701.3 299.8L701.7 291.2L702.0 281.9L702.4 272.3L702.7 262.4L703.0 252.8L703.4 243.5L703.7 234.9L704.1 227.2L704.4 220.5L704.8 215.2L705.1 211.2L705.5 208.8L705.8 208.0L706.1 208.8L706.5 211.2L706.8 215.1L707.2 220.5L707.5 227.1L707.8 234.8L708.2 243.4L708.5 252.6L708.9 262.3L709.2 272.1L709.5 281.7L709.9 290.9L710.2 299.5L710.6 307.3L710.9 313.9L711.2 319.2L711.6 323.1L711.9 325.5L712.2 326.4L712.6 325.5L712.9 323.2L713.3 319.2L713.6 313.9L713.9 307.3L714.3 299.6L714.6 291.0L715.0 281.8L715.3 272.2L715.6 262.5L716.0 252.8L716.3 243.6L716.7 235.0L717.0 227.3L717.3 220.7L717.7 215.4L718.0 211.5L718.4 209.1L718.7 208.3L719.0 209.1L719.4 211.5L719.7 215.4L720.1 220.7L720.4 227.3L720.8 234.9L721.1 243.5L721.5 252.6L721.8 262.2L722.1 271.9L722.5 281.5L722.8 290.7L723.2 299.2L723.5 306.9L723.9 313.5L724.2 318.8L724.6 322.7L724.9 325.0L725.2 325.9L725.6 325.1L725.9 322.7L726.3 318.8L726.6 313.5L727.0 307.0L727.3 299.4L727.7 290.9L728.0 281.8L728.4 272.2L728.7 262.6L729.0 253.1L729.4 244.0L729.7 235.5L730.1 227.9L730.4 221.3L730.8 216.0L731.1 212.2L731.5 209.8L731.8 209.0L732.1 209.8L732.5 212.1L732.8 216.0L733.2 221.3L733.5 227.8L733.9 235.3L734.2 243.8L734.6 252.9L734.9 262.3L735.2 271.9L735.6 281.4L735.9 290.5L736.3 298.9L736.6 306.5L737.0 313.0L737.3 318.2L737.7 322.1L738.0 324.5L738.3 325.2L738.7 324.5L739.0 322.1L739.4 318.3L739.7 313.0L740.1 306.6L740.4 299.0L740.8 290.6L741.1 281.6L741.5 272.2L741.8 262.6L742.1 253.2L742.5 244.1L742.8 235.7L743.2 228.2L743.5 221.7L743.9 216.5L744.2 212.6L744.6 210.3L744.9 209.5L745.2 210.3L745.6 212.6L745.9 216.5L746.3 221.7L746.6 228.1L746.9 235.6L747.3 244.0L747.6 253.0L748.0 262.4L748.3 271.9L748.6 281.3L749.0 290.3L749.3 298.7L749.7 306.2L750.0 312.7L750.3 317.9L750.7 321.7L751.0 324.1L751.3 324.9L751.7 324.1L752.0 321.7L752.4 317.9L752.7 312.7L753.0 306.3L753.4 298.8L753.7 290.4L754.1 281.4L754.4 272.1L754.7 262.6L755.1 253.2L755.4 244.2L755.8 235.9L756.1 228.4L756.4 221.9L756.8 216.7L757.1 212.9L757.5 210.6L757.8 209.8L758.1 210.5L758.5 212.6L758.8 216.0L759.2 220.7L759.5 226.5L759.9 233.4L760.2 241.0L760.6 249.3L760.9 258.0L761.3 267.0L761.6 275.9L762.0 284.6L762.3 292.9L762.7 300.6L763.0 307.4L763.4 313.2L763.7 317.9L764.1 321.4L764.4 323.4L764.8 324.1L765.1 323.5L765.4 321.4L765.8 318.0L766.1 313.3L766.5 307.6L766.8 300.8L767.2 293.2L767.5 285.0L767.9 276.4L768.2 267.5L768.6 258.7L768.9 250.0L769.3 241.8L769.6 234.2L770.0 227.5L770.3 221.7L770.7 217.1L771.0 213.7L771.4 211.6L771.7 210.9L772.0 211.6L772.4 213.6L772.7 217.0L773.0 221.6L773.4 227.4L773.7 234.1L774.0 241.6L774.4 249.7L774.7 258.3L775.1 267.1L775.4 275.9L775.7 284.4L776.1 292.6L776.4 300.1L776.7 306.8L777.1 312.5L777.4 317.1L777.7 320.5L778.1 322.6L778.4 323.2L778.7 322.6L779.1 320.5L779.4 317.2L779.7 312.6L780.1 306.9L780.4 300.2L780.7 292.8L781.1 284.7L781.4 276.2L781.8 267.4L782.1 258.7L782.4 250.2L782.8 242.1L783.1 234.6L783.4 228.0L783.8 222.3L784.1 217.7L784.4 214.3L784.8 212.3L785.1 211.6L785.4 212.3L785.8 214.3L786.1 217.6L786.5 222.2L786.8 227.8L787.2 234.4L787.5 241.8L787.9 249.8L788.2 258.2L788.6 266.9L788.9 275.5L789.3 284.0L789.6 292.0L790.0 299.4L790.3 306.0L790.7 311.6L791.0 316.1L791.4 319.4L791.7 321.5L792.0 322.1L792.4 321.5L792.7 319.5L793.1 316.2L793.4 311.7L793.8 306.2L794.1 299.7L794.5 292.4L794.8 284.5L795.2 276.2L795.5 267.6L795.9 259.1L796.2 250.8L796.6 242.9L796.9 235.6L797.3 229.1L797.6 223.5L798.0 219.0L798.3 215.8L798.7 213.8L799.0 213.1L799.3 213.7L799.7 215.5L800.0 218.4L800.4 222.5L800.7 227.5L801.1 233.4L801.4 240.0L801.7 247.3L802.1 255.0L802.4 262.9L802.8 271.0L803.1 279.0L803.5 286.7L803.8 293.9L804.1 300.6L804.5 306.5L804.8 311.5L805.2 315.5L805.5 318.5L805.9 320.2L806.2 320.9L806.5 320.3L806.9 318.5L807.2 315.6L807.6 311.6L807.9 306.6L808.3 300.8L808.6 294.2L808.9 287.0L809.3 279.4L809.6 271.5L810.0 263.5L810.3 255.7L810.7 248.0L811.0 240.9L811.3 234.3L811.7 228.4L812.0 223.5L812.4 219.5L812.7 216.6L813.1 214.8L813.4 214.2L813.7 214.8L814.1 216.6L814.4 219.4L814.8 223.4L815.1 228.3L815.5 234.1L815.8 240.7L816.2 247.8L816.5 255.4L816.9 263.2L817.2 271.1L817.6 279.0L817.9 286.5L818.3 293.7L818.6 300.2L819.0 306.0L819.3 310.9L819.7 314.9L820.0 317.8L820.4 319.6L820.7 320.1L821.0 319.6L821.4 317.8L821.7 314.9L822.1 311.0L822.4 306.0L822.8 300.3L823.1 293.7L823.5 286.6L823.8 279.1L824.2 271.3L824.5 263.4L824.9 255.6L825.2 248.0L825.6 240.9L825.9 234.4L826.3 228.6L826.6 223.7L827.0 219.7L827.3 216.8L827.7 215.1L828.0 214.5L828.3 215.0L828.7 216.6L829.0 219.2L829.3 222.8L829.7 227.3L830.0 232.6L830.3 238.6L830.7 245.2L831.0 252.2L831.3 259.5L831.7 267.0L832.0 274.4L832.3 281.7L832.7 288.8L833.0 295.3L833.3 301.3L833.7 306.6L834.0 311.1L834.3 314.7L834.7 317.3L835.0 318.9L835.3 319.4L835.7 318.9L836.0 317.3L836.4 314.7L836.7 311.2L837.0 306.8L837.4 301.5L837.7 295.6L838.0 289.1L838.4 282.2L838.7 274.9L839.0 267.5L839.4 260.2L839.7 252.9L840.0 246.0L840.4 239.5L840.7 233.6L841.0 228.3L841.4 223.9L841.7 220.3L842.0 217.8L842.4 216.2L842.7 215.6L843.0 216.2L843.4 217.7L843.7 220.3L844.1 223.8L844.4 228.3L844.8 233.5L845.1 239.4L845.4 245.8L845.8 252.7L846.1 259.9L846.5 267.2L846.8 274.6L847.2 281.8L847.5 288.7L847.8 295.1L848.2 301.0L848.5 306.2L848.9 310.7L849.2 314.2L849.6 316.8L849.9 318.3L850.2 318.9L850.6 318.3L850.9 316.8L851.3 314.2L851.6 310.7L852.0 306.2L852.3 301.0L852.7 295.1L853.0 288.7L853.3 281.8L853.7 274.6L854.0 267.2L854.4 259.9L854.7 252.7L855.1 245.8L855.4 239.4L855.7 233.5L856.1 228.3L856.4 223.8L856.8 220.3L857.1 217.7L857.5 216.2L857.8 215.7L858.1 216.2L858.5 217.8L858.8 220.3L859.2 223.9L859.5 228.3L859.8 233.6L860.2 239.5L860.5 246.0L860.8 252.9L861.2 260.2L861.5 267.5L861.9 274.9L862.2 282.2L862.5 289.1L862.9 295.6L863.2 301.5L863.6 306.8L863.9 311.2L864.2 314.7L864.6 317.3L864.9 318.9L865.2 319.4L865.6 318.9L865.9 317.3L866.3 314.7L866.6 311.1L866.9 306.6L867.3 301.3L867.6 295.3L868.0 288.8L868.3 281.7L868.6 274.4L869.0 267.0L869.3 259.5L869.7 252.2L870.0 245.2L870.3 238.6L870.7 232.6L871.0 227.3L871.3 222.8L871.7 219.2L872.0 216.6L872.4 215.0L872.7 214.5L873.0 215.1L873.4 216.9L873.7 219.7L874.1 223.7L874.4 228.6L874.7 234.4L875.1 241.0L875.4 248.1L875.8 255.7L876.1 263.5L876.4 271.4L876.8 279.2L877.1 286.8L877.5 293.9L877.8 300.5L878.1 306.3L878.5 311.2L878.8 315.2L879.2 318.1L879.5 319.8L879.8 320.4L880.2 319.8L880.5 318.1L880.9 315.1L881.2 311.1L881.6 306.2L881.9 300.3L882.2 293.7L882.6 286.5L882.9 278.9L883.3 271.0L883.6 263.0L883.9 255.2L884.3 247.5L884.6 240.3L885.0 233.8L885.3 227.9L885.6 222.9L886.0 218.9L886.3 216.0L886.7 214.2L887.0 213.6L887.3 214.3L887.7 216.0L888.0 219.0L888.3 223.0L888.7 228.0L889.0 233.9L889.3 240.5L889.7 247.8L890.0 255.4L890.3 263.4L890.7 271.4L891.0 279.4L891.3 287.0L891.7 294.3L892.0 300.9L892.3 306.8L892.7 311.8L893.0 315.8L893.3 318.8L893.7 320.5L894.0 321.1L894.3 320.5L894.7 318.7L895.0 315.8L895.3 311.8L895.7 306.7L896.0 300.8L896.3 294.1L896.7 286.8L897.0 279.1L897.3 271.1L897.7 263.1L898.0 255.1L898.3 247.4L898.7 240.1L899.0 233.4L899.3 227.5L899.7 222.4L900.0 218.4L900.3 215.5L900.7 213.7L901.0 213.1L901.3 213.7L901.7 215.7L902.0 219.0L902.3 223.4L902.7 229.0L903.0 235.5L903.4 242.8L903.7 250.6L904.0 259.0L904.4 267.5L904.7 276.0L905.0 284.3L905.4 292.2L905.7 299.4L906.1 305.9L906.4 311.5L906.7 315.9L907.1 319.2L907.4 321.2L907.8 321.9L908.1 321.2L908.4 319.2L908.8 315.9L909.1 311.4L909.4 305.8L909.8 299.3L910.1 291.9L910.5 284.0L910.8 275.6L911.1 267.0L911.5 258.5L911.8 250.1L912.1 242.1L912.5 234.8L912.8 228.3L913.2 222.7L913.5 218.2L913.8 214.9L914.2 212.9L914.5 212.2L914.8 215.9L915.2 221.9L915.5 229.0L915.9 236.8L916.2 245.0L916.6 253.4L916.9 261.8L917.3 270.2L917.6 278.4L918.0 286.3L918.3 293.8L918.7 301.0L919.0 307.6L919.3 313.8L919.7 319.4L920.0 324.4L920.4 328.9L920.7 332.7L921.1 336.0L921.4 338.6L921.8 340.6L922.1 342.1L922.5 342.9L922.8 343.2L923.1 342.2L923.5 340.4L923.8 337.8L924.1 334.8L924.5 331.5L924.8 326.4L925.1 321.0L925.5 317.3L925.8 314.3L926.1 311.5L926.5 308.1L926.8 303.5L927.1 298.0L927.5 293.2L927.8 290.0L928.2 287.5L928.5 285.4L928.8 283.5L929.2 281.7L929.5 280.0L929.8 278.3L930.2 276.7L930.5 275.3L930.8 274.1L931.2 273.1L931.5 272.3L931.8 271.5L932.2 270.8L932.5 270.2L932.8 269.6L933.2 269.1L933.5 268.6L933.8 268.2L934.2 267.9L934.5 267.6L934.8 267.3L935.2 267.1L935.5 267.0L935.8 266.8L936.2 266.7L936.5 266.5L936.8 266.4L937.2 266.3L937.5 266.2L937.8 266.0L938.2 265.8L938.5 265.7L938.9 265.5L939.2 265.3L939.5 265.1L939.9 264.9L940.2 264.7L940.5 264.5L940.9 264.3L941.2 264.1L941.5 263.9L941.9 263.6L942.2 263.4L942.5 263.1L942.9 262.7L943.2 262.4L943.5 262.0L943.9 261.5L944.2 260.9L944.5 260.1L944.9 259.2L945.2 258.1L945.5 257.0L945.9 255.8L946.2 254.3L946.5 252.6L946.9 250.7L947.2 248.8L947.5 246.7L947.9 244.2L948.2 241.1L948.6 236.1L948.9 228.5L949.2 221.9L949.6 217.0L949.9 212.6L950.2 208.7L950.6 205.4L950.9 202.3L951.2 199.3L951.6 196.5L951.9 194.0L952.2 191.7L952.6 189.8L952.9 188.2L953.2 188.3L953.6 188.9L953.9 190.1L954.3 192.2L954.6 195.2L955.0 199.3L955.3 204.6L955.7 211.0L956.0 218.5L956.4 227.0L956.7 236.5L957.0 246.6L957.4 257.2L957.7 268.1L958.1 278.8L958.4 289.2L958.8 298.8L959.1 307.3L959.5 314.4L959.8 319.7L960.2 323.1L960.5 324.2L960.8 323.4L961.2 320.8L961.5 316.6L961.9 310.9L962.2 303.9L962.5 295.7L962.9 286.7L963.2 277.1L963.5 267.2L963.9 257.3L964.2 247.7L964.6 238.7L964.9 230.5L965.2 223.5L965.6 217.8L965.9 213.6L966.3 211.0L966.6 210.2L966.9 210.9L967.3 213.2L967.6 217.0L968.0 222.2L968.3 228.5L968.6 236.0L969.0 244.2L969.3 253.1L969.7 262.4L970.0 271.8L970.3 281.1L970.7 290.0L971.0 298.3L971.4 305.7L971.7 312.1L972.0 317.2L972.4 321.0L972.7 323.3L973.0 324.1L973.4 323.3L973.7 321.0L974.1 317.2L974.4 312.1L974.7 305.8L975.1 298.4L975.4 290.2L975.8 281.3L976.1 272.1L976.4 262.7L976.8 253.5L977.1 244.6L977.5 236.4L977.8 229.0L978.1 222.7L978.5 217.5L978.8 213.8L979.2 211.5L979.5 210.7L979.8 211.6L980.2 214.1L980.5 218.3L980.9 223.9L981.2 230.9L981.6 239.0L981.9 247.9L982.3 257.4L982.6 267.2L983.0 277.1L983.3 286.6L983.7 295.5L984.0 303.6L984.4 310.6L984.7 316.2L985.1 320.4L985.4 322.9L985.8 323.8L986.1 322.9L986.4 320.4L986.8 316.2L987.1 310.6L987.5 303.6L987.8 295.5L988.2 286.6L988.5 277.1L988.9 267.2L989.2 257.4L989.6 247.9L989.9 239.0L990.3 230.9L990.6 223.9L991.0 218.3L991.3 214.1L991.7 211.6L992.0 210.7L992.3 211.5L992.7 213.8L993.0 217.5L993.4 222.6L993.7 228.9L994.1 236.3L994.4 244.5L994.7 253.4L995.1 262.6L995.4 271.9L995.8 281.1L996.1 290.0L996.4 298.2L996.8 305.6L997.1 311.9L997.5 317.0L997.8 320.7L998.2 323.0L998.5 323.8L998.8 323.0L999.2 320.7L999.5 317.0L999.9 311.9L1000.2 305.6L1000.6 298.2L1000.9 290.0L1001.2 281.1L1001.6 271.9L1001.9 262.6L1002.3 253.4L1002.6 244.5L1002.9 236.3L1003.3 228.9L1003.6 222.6L1004.0 217.5L1004.3 213.8L1004.7 211.5L1005.0 210.7L1005.3 211.6L1005.7 214.1L1006.0 218.3L1006.4 224.0L1006.7 230.9L1007.1 239.0L1007.4 248.0L1007.8 257.5L1008.1 267.4L1008.5 277.2L1008.8 286.8L1009.2 295.7L1009.5 303.8L1009.9 310.8L1010.2 316.5L1010.6 320.7L1010.9 323.2L1011.2 324.1L1011.6 323.2L1011.9 320.6L1012.3 316.4L1012.6 310.7L1013.0 303.7L1013.3 295.6L1013.7 286.6L1014.0 277.0L1014.4 267.1L1014.7 257.2L1015.1 247.6L1015.4 238.6L1015.8 230.5L1016.1 223.5L1016.5 217.8L1016.8 213.6L1017.2 211.0L1017.5 210.2L1017.8 211.0L1018.2 213.6L1018.5 217.8L1018.9 223.5L1019.2 230.5L1019.5 238.6L1019.9 247.6L1020.2 257.2L1020.6 267.1L1020.9 277.0L1021.3 286.6L1021.6 295.6L1021.9 303.7L1022.3 310.7L1022.6 316.4L1023.0 320.6L1023.3 323.2L1023.7 324.1L1024.0 323.2L1024.3 320.7L1024.7 316.5L1025.0 310.8L1025.4 303.8L1025.7 295.7L1026.0 286.8L1026.4 277.2L1026.7 267.4L1027.1 257.5L1027.4 248.0L1027.8 239.0L1028.1 230.9L1028.4 224.0L1028.8 218.3L1029.1 214.1L1029.5 211.6L1029.8 210.7L1030.1 211.5L1030.5 213.8L1030.8 217.5L1031.1 222.6L1031.5 228.9L1031.8 236.3L1032.1 244.5L1032.5 253.4L1032.8 262.6L1033.1 271.9L1033.5 281.1L1033.8 290.0L1034.1 298.2L1034.5 305.6L1034.8 311.9L1035.1 317.0L1035.5 320.7L1035.8 323.0L1036.2 323.8L1036.5 323.0L1036.8 320.7L1037.2 317.0L1037.5 311.9L1037.8 305.6L1038.2 298.2L1038.5 290.0L1038.8 281.1L1039.2 271.9L1039.5 262.6L1039.8 253.4L1040.2 244.5L1040.5 236.3L1040.8 228.9L1041.2 222.6L1041.5 217.5L1041.8 213.8L1042.2 211.5L1042.5 210.7" stroke="#38d850" stroke-width="1.3" fill="none" shape-rendering="crispEdges"/><use href="#bw" stroke="#3f88e0" stroke-width="1" fill="none" shape-rendering="crispEdges"/></svg>
<div class="a" style="left:303px;top:137px;width:1031px;height:2px;background:#fff"></div>
<div class="a" style="left:303px;top:670px;width:1031px;height:15px;background:#f0f0f0"></div>
<div class="a" style="left:303px;top:670px;width:15px;height:15px;background:#fafafa;border:1px solid #e0e0e0"></div>
<svg class="a" style="left:306px;top:674px" width="6" height="7" viewBox="0 0 6 7"><path d="M0 3.5L5 0v7z" fill="#111"/></svg>
<div class="a" style="left:318px;top:670px;width:41px;height:15px;background:#a0a0a0"></div>
<div class="a" style="left:1317px;top:670px;width:16px;height:15px;background:#f8f8f8;border-left:1px solid #a8a8a8;border-right:1px solid #303030"></div>
<svg class="a" style="left:1323px;top:674px" width="6" height="7" viewBox="0 0 6 7"><path d="M6 3.5L1 0v7z" fill="#111"/></svg>
<div class="a" style="left:303px;top:684px;width:1031px;height:2px;background:#a0a0a0"></div>
<svg class="a" style="left:313px;top:670px" width="13" height="16" viewBox="0 0 13 16"><path d="M6.5 1L1 7h4v9h3V7h4z" fill="#000" stroke="#fff" stroke-width="0.8"/></svg>
<div class="a" style="left:206px;top:686px;width:1158px;height:21px;background:#000;border-top:1px solid #f0f0f0;border-bottom:2px solid #a8a8a8"></div>
<div class="t" style="left:243px;top:693px;width:120px;text-align:center;color:#fff;letter-spacing:0px">4.000 ms</div>
<div class="t" style="left:346px;top:693px;width:120px;text-align:center;color:#fff;letter-spacing:0px">13.600 ms</div>
<div class="t" style="left:449px;top:693px;width:120px;text-align:center;color:#fff;letter-spacing:0px">23.200 ms</div>
<div class="t" style="left:552px;top:693px;width:120px;text-align:center;color:#fff;letter-spacing:0px">32.800 ms</div>
<div class="t" style="left:655px;top:693px;width:120px;text-align:center;color:#fff;letter-spacing:0px">42.400 ms</div>
<div class="t" style="left:758px;top:693px;width:120px;text-align:center;color:#fff;letter-spacing:0px">52.000 ms</div>
<div class="t" style="left:861px;top:693px;width:120px;text-align:center;color:#fff;letter-spacing:0px">61.600 ms</div>
<div class="t" style="left:964px;top:693px;width:120px;text-align:center;color:#fff;letter-spacing:0px">71.200 ms</div>
<div class="t" style="left:1067px;top:693px;width:120px;text-align:center;color:#fff;letter-spacing:0px">80.800 ms</div>
<div class="t" style="left:1170px;top:693px;width:120px;text-align:center;color:#fff;letter-spacing:0px">90.400 ms</div>
<div class="t" style="left:1273px;top:693px;width:120px;text-align:center;color:#fff;letter-spacing:0px">100.000 ms</div>
<div class="a" style="left:0;top:707px;width:1366px;height:21px;background:#f0eeec;border-top:2px solid #fff"></div><div class="a" style="left:0;top:709px;width:1366px;height:1px;background:#909090"></div><div class="a" style="left:0;top:710px;width:1366px;height:1px;background:#fff"></div><div class="a" style="left:0;top:727px;width:1366px;height:1px;background:#fff"></div><div class="a" style="left:0;top:707px;width:201px;height:2px;background:#a0a0a0"></div>
<div class="t" style="left:2px;top:715px;color:#101010;letter-spacing:-0.1px">A. Sleep een rechthoek met de muis , om de positie van de nieuwe grafiek aan te geven., B. Klik rechts om instellingen te wijzigen</div>
<div class="a" style="left:0;top:728px;width:1366px;height:40px;background:linear-gradient(90deg,#9aaac0 0,#a0bcd8 100px,#98b4d0 250px,#8aa4be 400px,#6e849a 605px,#54667c 800px,#465668 950px,#3a4758 1100px,#323e4e 1366px);border-top:1px solid #283038"></div>
<div class="a" style="left:0;top:729px;width:1366px;height:1px;background:rgba(255,255,255,0.45)"></div>
<div class="a" style="left:0;top:730px;width:1366px;height:8px;background:linear-gradient(rgba(255,255,255,0.12),rgba(255,255,255,0))"></div>
<svg class="a" style="left:8px;top:729px" width="38" height="38" viewBox="0 0 38 38"><defs><radialGradient id="og" cx="50%" cy="80%" r="65%"><stop offset="0" stop-color="#20d0f8"/><stop offset="0.5" stop-color="#1478c0"/><stop offset="1" stop-color="#0a3a70"/></radialGradient><linearGradient id="og2" x1="0" y1="0" x2="0" y2="1"><stop offset="0" stop-color="#e8f0f8" stop-opacity="0.9"/><stop offset="1" stop-color="#a0b8d0" stop-opacity="0.2"/></linearGradient></defs><circle cx="19" cy="19.5" r="18" fill="#c8dcf0" opacity="0.5"/><circle cx="19" cy="19.5" r="17" fill="url(#og)" stroke="#18406a" stroke-width="1"/><ellipse cx="19" cy="12" rx="14" ry="9" fill="url(#og2)"/><path d="M11 10c3-2 5-1.5 8 0l-1.5 7c-3-1.5-5-1.5-8 0z" fill="#e85818"/><path d="M20 10.5c3 1.5 5 1.5 8 0l-1.5 7c-3 1.5-5 1.5-8 0z" fill="#70b030"/><path d="M9.5 18c3-1.5 5-1.5 8 0l-1.5 7c-3-1.5-5-1.5-8 0z" fill="#30a0e8"/><path d="M18.5 18.5c3 1.5 5 1.5 8 0l-1.5 7c-3 1.5-5 1.5-8 0z" fill="#f8c828"/></svg>
<div class="a" style="left:59px;top:729px;width:55px;height:38px;border:1px solid rgba(30,40,50,0.7);border-radius:3px;background:linear-gradient(rgba(255,255,255,0.7),rgba(255,255,255,0.5) 50%,rgba(255,255,255,0.4));box-shadow:inset 0 0 0 1px rgba(255,255,255,0.5)"></div><svg class="a" style="left:70px;top:735px" width="32" height="28" viewBox="0 0 32 28"><path d="M2 3h10l2 2h16v20H2z" fill="#e8c870" stroke="#b89840"/><rect x="4" y="2" width="3" height="2" fill="#30b030"/><rect x="12" y="4" width="3" height="2" fill="#d03030"/><rect x="20" y="6" width="3" height="2" fill="#3090d0"/><path d="M2 10h28v15H2z" fill="#f8e090"/><path d="M8 26v-9h16v9h-4v-5h-8v5z" fill="#58b8e8" stroke="#3888c0"/></svg>
<div class="a" style="left:114px;top:729px;width:4px;height:38px;border:1px solid rgba(30,40,50,0.5);border-left:none;border-radius:0 3px 3px 0;background:rgba(255,255,255,0.3)"></div>
<svg class="a" style="left:137px;top:731px" width="30" height="36" viewBox="0 0 30 36"><defs><linearGradient id="bt" x1="0" y1="0" x2="0" y2="1"><stop offset="0" stop-color="#60c040"/><stop offset="0.35" stop-color="#c0e080"/><stop offset="0.55" stop-color="#e8d8f0"/><stop offset="1" stop-color="#c0a8d8"/></linearGradient></defs><rect x="4" y="3" width="12" height="30" rx="5" fill="url(#bt)" stroke="#505060" stroke-width="0.8"/><path d="M7 9.5h5M9.5 7v5M7 27h4" stroke="#111" stroke-width="1.4"/><path d="M22 6c0 7-2 10-5 12 3 2 5 5 5 12 0-7 2-10 5-12-3-2-5-5-5-12z" fill="#e8f4ff" stroke="#7898c0" stroke-width="0.8"/></svg>
<div class="a" style="left:183px;top:729px;width:59px;height:38px;border:1px solid rgba(30,40,50,0.7);border-radius:3px;background:linear-gradient(rgba(255,255,255,0.7),rgba(255,255,255,0.5) 50%,rgba(255,255,255,0.4));box-shadow:inset 0 0 0 1px rgba(255,255,255,0.5)"></div><svg class="a" style="left:196px;top:732px" width="34" height="32" viewBox="0 0 34 32"><path d="M18 4a13 12 0 1 0 11.5 17h-8a5.5 5 0 0 1-9-3h17.5a13 12 0 0 0-12-14zm-5.5 10a5.5 4.5 0 0 1 11 0z" fill="#48b4f0" stroke="#2070b0" stroke-width="0.8"/><path d="M4 27c-4-6 8-22 24-24 5 0 5 3 2 7" stroke="#f0c830" stroke-width="2.5" fill="none"/></svg>
<div class="a" style="left:245px;top:729px;width:59px;height:38px;border:1px solid rgba(30,40,50,0.7);border-radius:3px;background:linear-gradient(rgba(255,255,255,0.7),rgba(255,255,255,0.5) 50%,rgba(255,255,255,0.4));box-shadow:inset 0 0 0 1px rgba(255,255,255,0.5)"></div><svg class="a" style="left:258px;top:732px" width="34" height="33" viewBox="0 0 34 33"><path d="M11 1h12l9 9v11l-9 9H11l-9-9V10z" fill="#0a0a0a" stroke="#505050" stroke-width="0.6"/><path d="M2 18.6h9.5v-8.2h15.3v4.4H32" stroke="#d02a20" stroke-width="1.6" fill="none"/><path d="M2 12c3-6 7-8 10-7s4 7 7 10 6 3 13 2" stroke="#30d040" stroke-width="1.3" fill="none"/><path d="M2 12h6c3 0 4 8 8 8h15" stroke="#40c8c0" stroke-width="1.3" fill="none"/><circle cx="16" cy="14.8" r="2.2" fill="#e8ffe8" opacity="0.9"/><text x="12" y="29.5" font-size="7.5" font-weight="bold" fill="#e8e8e8" font-family="Liberation Sans">TP</text></svg>
<svg class="a" style="left:1154px;top:744px" width="10" height="6" viewBox="0 0 10 6"><path d="M1 5l4-4 4 4z" fill="#e8eef4"/></svg>
<svg class="a" style="left:1176px;top:738px" width="16" height="20" viewBox="0 0 16 20"><path d="M2 2v17" stroke="#f0f4f8" stroke-width="1.6"/><path d="M3 3h5l1 2h5l-2 3 2 3H8l-1-2H3z" fill="#f0f4f8"/></svg>
<svg class="a" style="left:1203px;top:739px" width="11" height="18" viewBox="0 0 11 18"><rect x="1" y="2.5" width="9" height="14" rx="2" fill="none" stroke="#f0f4f8" stroke-width="1.4"/><rect x="3.5" y="0.5" width="4" height="2" fill="#f0f4f8"/><rect x="3" y="5" width="5" height="10" fill="#e0e8f0"/></svg>
<svg class="a" style="left:1224px;top:741px" width="16" height="14" viewBox="0 0 16 14"><path d="M1 13h2v-2H1zM4.5 13h2V9h-2zM8 13h2V6H8zM11.5 13h2V3h-2z" fill="#f0f4f8"/></svg>
<svg class="a" style="left:1248px;top:740px" width="18" height="16" viewBox="0 0 18 16"><path d="M1 5h3l5-4v14l-5-4H1z" fill="#f0f4f8"/><path d="M11 5c1.5 1.5 1.5 4.5 0 6M13.5 3c2.5 2.5 2.5 7.5 0 10" stroke="#f0f4f8" stroke-width="1.3" fill="none"/></svg>
<div class="t" style="left:1281px;top:735px;width:60px;text-align:center;color:#fff;font-size:12px;letter-spacing:-0.5px">16:14</div>
<div class="t" style="left:1281px;top:752px;width:60px;text-align:center;color:#fff;font-size:12px;letter-spacing:-0.1px">11/04/2014</div>
<div class="a" style="left:1352px;top:729px;width:14px;height:39px;border-left:1px solid #202830;background:linear-gradient(90deg,rgba(255,255,255,0.25),rgba(255,255,255,0.1))"></div>
</body></html>
